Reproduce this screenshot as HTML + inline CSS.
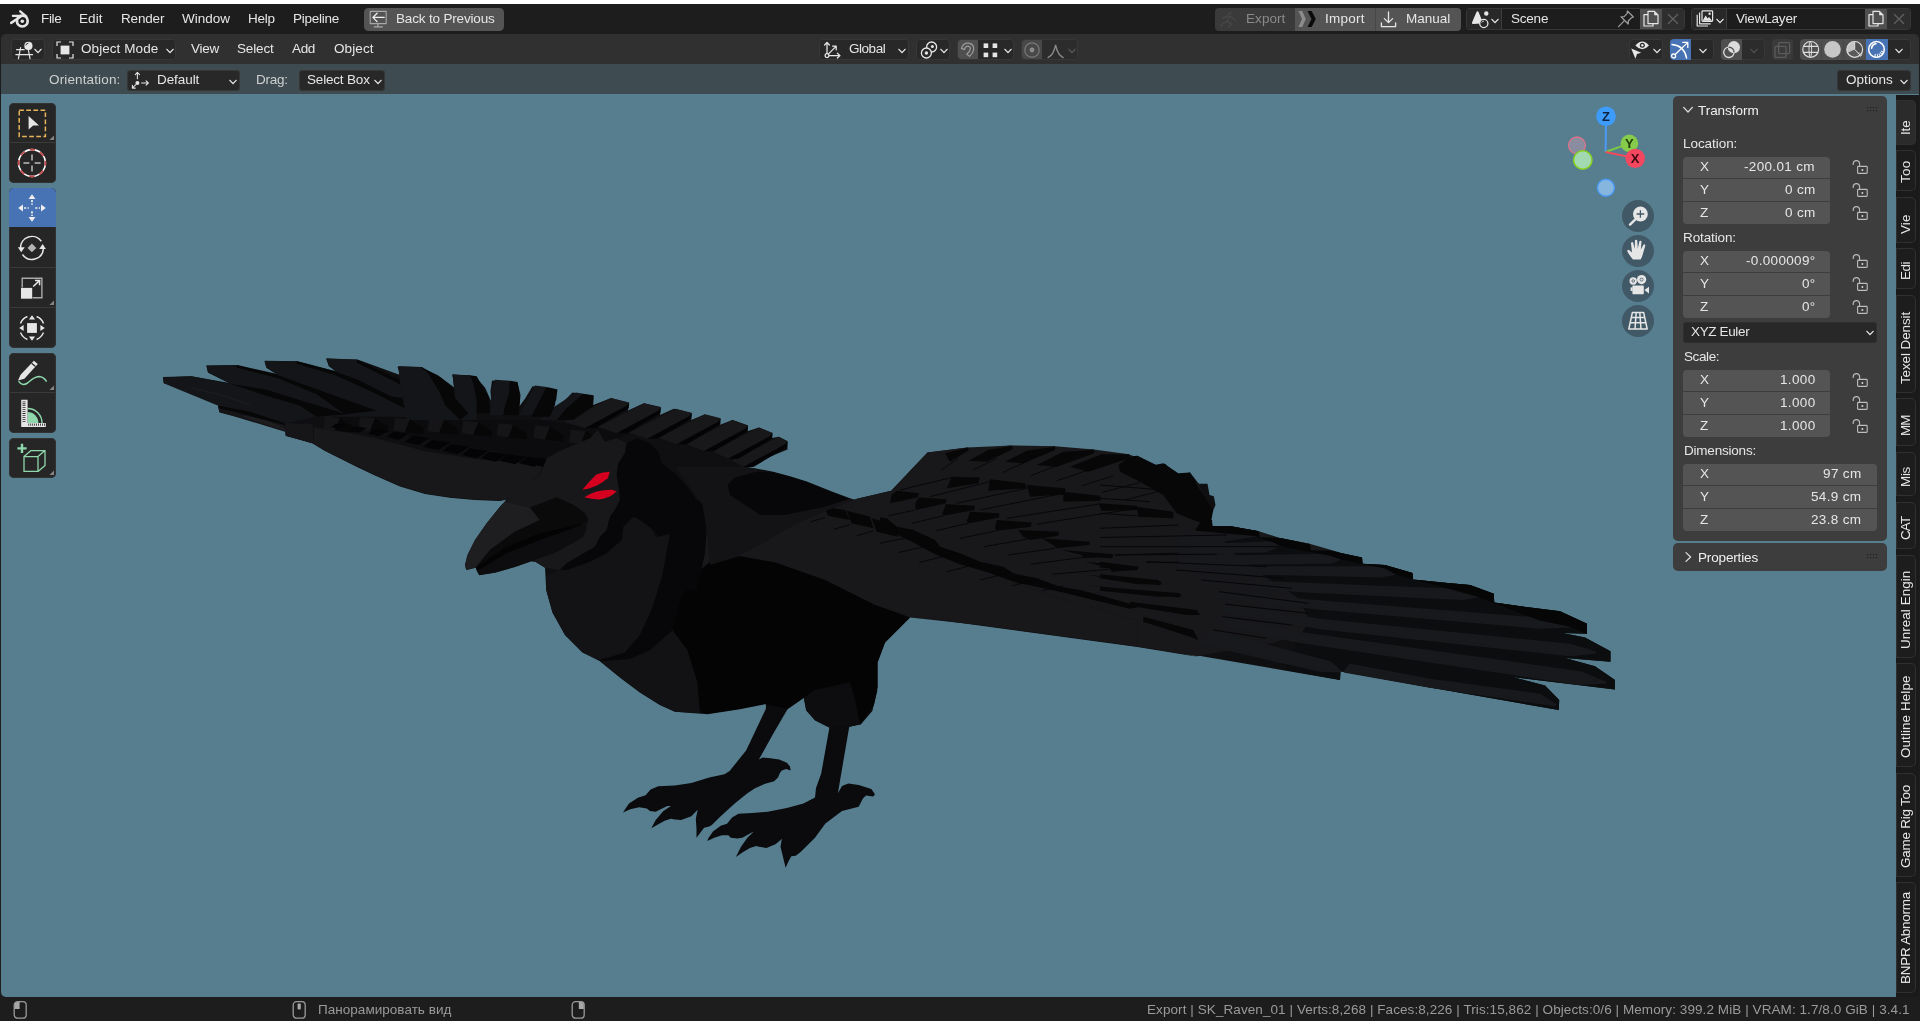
<!DOCTYPE html>
<html><head><meta charset="utf-8"><title>Blender</title>
<style>
html,body{margin:0;padding:0;}
body{width:1920px;height:1021px;overflow:hidden;position:relative;background:#1d1d1d;font-family:"Liberation Sans",sans-serif;}
.b{position:absolute;display:block;box-sizing:border-box;}
.t{position:absolute;white-space:nowrap;height:20px;line-height:20px;will-change:transform;}
.vt{position:absolute;white-space:nowrap;transform-origin:0 0;transform:rotate(-90deg);height:20px;line-height:20px;font-size:13px;color:#e6e6e6;will-change:transform;}
</style></head>
<body>
<div class="b" style="left:0px;top:0px;width:1920px;height:4px;background:#ffffff;border-radius:0px;"></div>
<div class="b" style="left:1px;top:60px;width:1918px;height:937px;background:#567e8f;border-radius:0 0 5px 5px;"></div>
<svg class="b" style="left:0;top:0" width="1920" height="1021" viewBox="0 0 1920 1021"><polygon points="163.0,377.0 191.2,376.2 229.5,383.0 208.0,372.5 206.2,365.5 237.5,365.0 277.5,374.0 266.2,367.5 264.5,361.2 297.5,361.2 336.2,371.2 328.8,366.2 326.2,358.8 357.5,359.5 400.0,375.0 400.0,373.8 397.5,367.0 420.0,367.0 437.5,375.0 455.0,388.0 453.8,382.5 452.5,374.5 475.0,376.2 485.0,387.5 491.2,401.2 490.5,391.2 492.0,380.5 517.5,382.5 520.5,395.0 519.5,406.2 525.0,398.8 532.5,386.2 557.5,389.5 556.2,400.0 550.0,410.5 562.5,402.5 572.5,392.5 593.8,395.8 593.2,405.0 611.2,398.0 628.8,403.0 628.0,410.5 643.8,403.2 660.8,407.0 660.0,415.0 673.8,408.8 691.8,413.0 691.2,420.0 704.5,414.5 720.0,418.8 719.5,425.0 732.5,420.0 748.0,425.5 747.5,431.2 758.8,427.5 772.5,433.0 772.0,438.0 778.8,436.8 787.5,441.2 787.5,449.5 745.0,466.8 735.0,505.0 635.0,535.0 510.0,498.8 500.0,501.0 475.0,500.0 450.0,497.8 425.0,494.0 400.0,486.5 375.0,475.5 357.5,467.2 325.0,451.0 313.8,444.2 312.5,443.0 285.8,436.0 285.0,429.2 219.5,412.5 218.0,406.2 222.5,400.5 163.8,383.0" fill="#0f0f11" />
<polygon points="505.0,501.2 500.0,506.7 486.7,523.3 475.0,540.0 467.5,555.0 465.0,565.0 466.3,570.0 475.8,567.8 477.0,571.2 479.2,575.3 495.0,572.8 515.0,567.0 531.7,561.2 535.8,562.0 545.0,567.8 545.5,576.2 546.2,590.0 552.5,612.5 565.0,635.0 582.5,652.5 600.0,661.2 620.0,677.5 640.0,692.5 660.0,705.0 675.0,711.8 707.5,714.2 740.0,709.2 765.0,704.2 787.5,709.2 803.8,698.0 806.2,710.5 815.0,720.5 830.0,728.0 850.0,726.8 860.0,724.2 873.8,705.0 877.5,687.5 877.5,662.5 885.0,642.5 910.0,617.5 950.0,575.0 910.0,505.0 854.0,499.8 831.8,491.5 806.8,481.5 790.0,476.2 773.2,471.8 760.0,469.2 745.0,466.8 685.0,452.5 610.0,440.0 535.0,450.0" fill="#0f0f11" />
<polygon points="855.0,499.2 891.2,490.8 927.5,452.5 967.5,447.5 968.8,449.5 1011.2,445.5 1012.5,447.5 1055.0,446.2 1056.2,448.8 1093.8,449.5 1095.0,452.5 1128.8,454.2 1130.0,457.0 1137.5,455.8 1156.2,465.0 1165.0,463.8 1177.5,475.0 1190.0,472.5 1198.8,483.8 1207.5,483.8 1209.5,495.0 1213.8,496.2 1215.5,505.0 1210.0,517.5 1202.5,518.0 1211.2,520.0 1212.5,526.2 1230.0,526.2 1258.8,531.2 1259.5,537.5 1280.0,538.0 1309.5,543.8 1310.0,550.0 1330.0,550.8 1362.0,557.5 1362.5,563.8 1385.0,565.0 1412.5,573.0 1413.0,579.5 1442.5,582.5 1470.0,585.0 1493.8,593.8 1494.2,602.5 1530.0,607.5 1560.0,611.2 1587.0,623.8 1587.0,633.8 1562.5,633.0 1585.0,637.5 1610.5,651.2 1610.5,661.8 1565.0,658.0 1595.0,666.2 1615.0,680.0 1615.0,689.5 1512.5,677.0 1545.0,685.5 1559.2,700.0 1558.8,710.0 1430.0,687.5 1340.5,671.2 1340.0,680.0 1180.0,652.5 1197.5,656.8 1137.5,647.0 911.2,616.2 875.0,605.0 850.0,555.0" fill="#0f0f11" />
<polygon points="765.9,702.5 765.9,708.8 746.1,750.5 729.6,771.0 724.5,774.2 709.2,777.4 691.4,783.1 674.8,785.6 658.3,786.3 650.6,789.5 645.6,795.2 637.9,797.7 629.0,803.5 622.9,812.6 630.3,809.2 639.2,807.3 646.8,808.6 650.0,811.1 655.7,811.7 659.6,809.8 667.2,806.0 671.0,806.0 663.4,811.1 655.7,820.0 651.3,828.3 657.0,825.1 664.6,820.7 671.0,818.7 674.8,819.4 681.2,820.0 691.4,816.2 697.7,809.8 695.8,818.7 696.5,828.9 696.5,837.8 700.3,832.7 704.1,827.7 709.2,826.4 711.8,825.1 720.7,816.2 734.7,803.5 747.4,793.3 755.0,788.2 765.2,783.7 774.1,781.2 778.0,777.4 779.9,772.9 781.8,770.4 786.2,769.1 790.7,770.4 790.0,766.5 786.9,762.7 779.2,759.5 770.3,758.3 762.7,757.6 758.9,759.5 773.2,733.8 787.8,708.8 789.9,698.3" fill="#0b0b0d" />
<polygon points="805.5,690.0 805.5,699.4 808.7,710.9 821.2,721.3 829.5,727.1 821.2,773.5 816.0,788.1 815.0,797.4 803.4,803.5 786.9,807.9 767.8,811.7 752.5,813.0 738.5,813.7 732.1,817.5 727.0,823.8 720.7,825.7 713.0,831.5 708.6,837.8 707.3,841.0 714.3,837.8 721.9,835.3 728.3,835.3 730.8,837.8 737.2,838.5 742.3,837.8 749.9,833.4 753.8,831.5 747.4,837.8 741.0,846.8 735.9,856.9 742.3,852.5 749.9,848.0 756.3,846.1 758.9,846.8 766.5,848.0 775.4,844.2 781.8,839.1 780.5,846.8 783.0,856.9 785.6,867.8 788.8,860.8 791.3,856.3 795.8,855.7 800.9,851.8 815.0,837.8 825.4,823.5 842.0,811.0 858.7,806.8 862.9,798.5 866.0,795.4 873.3,796.4 875.0,794.3 871.3,789.1 858.7,784.9 848.3,783.5 842.0,786.0 837.9,793.3 844.1,756.8 849.3,726.5 860.8,724.4 872.3,710.9 877.5,690.0" fill="#0b0b0d" />
<polygon points="707.5,500.0 705.0,525.0 697.5,572.5 712.5,560.0 740.0,556.2 775.0,562.5 825.0,580.0 875.0,605.0 910.0,617.5 980.0,625.0 980.0,500.0" fill="#18181b" />
<polygon points="313.8,427.5 340.0,431.2 375.0,438.0 425.0,451.2 475.0,458.8 512.5,462.5 543.8,464.5 538.8,475.0 510.0,498.0 500.0,500.5 475.0,499.5 450.0,497.2 425.0,493.5 400.0,486.0 375.0,475.0 357.5,466.8 325.0,450.5 313.8,443.8" fill="#18181b" />
<polygon points="285.0,423.0 312.5,424.5 313.8,443.8 285.8,435.5" fill="#161619" />
<polygon points="850.0,512.5 875.0,517.5 912.5,532.5 950.0,552.5 1000.0,577.5 1050.0,595.0 1100.0,610.0 1137.5,620.5 1137.5,646.5 911.2,615.8 875.0,605.0 850.0,592.5" fill="#18181b" />
<polygon points="163.0,377.5 191.7,376.3 230.0,383.8 208.0,372.5 206.7,365.8 236.7,365.3 277.5,375.0 266.7,368.0 264.7,360.8 296.7,361.3 335.8,371.7 329.2,365.8 326.3,358.3 356.7,359.7 400.0,379.2 400.0,376.7 398.3,366.3 421.7,367.0 455.0,390.0 454.2,386.7 452.5,374.7 470.0,375.3 476.7,383.3 476.7,421.7 433.3,423.3 400.0,420.0 350.0,418.3 316.7,416.7 285.0,423.3 218.3,405.8 163.7,383.3" fill="#141518" />
<polygon points="230.0,383.8 266.7,389.7 310.0,403.3 346.7,414.2 316.7,416.7 300.0,405.8 266.7,395.8" fill="#070708" />
<polygon points="236.7,365.3 277.5,375.0 300.0,383.3 341.7,398.3 376.7,410.8 345.0,414.2 316.7,394.2 278.3,378.3 236.7,367.5" fill="#070708" />
<polygon points="296.7,361.3 335.8,371.7 358.3,380.0 391.7,396.7 420.0,400.0 438.3,410.0 408.3,410.0 375.0,393.3 335.0,375.0 296.7,363.7" fill="#070708" />
<polygon points="356.7,359.7 400.0,379.7 423.3,398.3 443.3,405.0 460.0,407.5 438.3,410.3 420.0,400.0 396.7,382.5 356.7,362.5" fill="#070708" />
<polygon points="421.7,367.0 441.7,378.3 455.0,390.0 466.7,405.0 456.7,405.0 440.0,385.8 420.0,370.8" fill="#070708" />
<polygon points="218.3,405.8 250.0,411.7 285.0,423.3 285.3,425.3 250.0,415.8 218.7,408.3" fill="#070708" />
<polygon points="218.7,408.3 250.0,415.8 285.3,425.3 285.0,431.7 219.2,411.7" fill="#151518" />
<polygon points="243.3,415.3 266.7,420.8 285.0,428.3 285.0,430.3 265.0,424.2 243.3,417.3" fill="#1e1e21" />
<polygon points="191.7,387.0 220.0,393.7 250.0,403.7 250.0,405.3 220.0,395.7 191.7,388.7" fill="#1b1b1e" />
<polygon points="285.0,423.0 312.5,424.5 313.8,443.8 285.8,435.5" fill="#161619" />
<polygon points="333.3,416.7 390.0,416.7 460.0,420.0 540.0,420.0 573.3,425.0 615.0,423.3 640.0,428.3 606.7,443.3 556.7,460.0 540.0,458.3 456.7,445.0 390.0,431.7 332.5,424.2" fill="#0c0c0e" />
<polygon points="778.7,436.7 787.5,441.2 785.0,444.5 743.3,467.0 732.0,460.3" fill="#18181b" />
<polygon points="787.5,441.2 787.0,447.0 753.3,467.0 743.3,467.0 785.0,444.5" fill="#040406" />
<polygon points="758.7,427.5 772.5,433.0 770.0,436.3 728.3,458.8 712.0,451.2" fill="#18181b" />
<polygon points="772.5,433.0 772.0,438.8 738.3,458.8 728.3,458.8 770.0,436.3" fill="#040406" />
<polygon points="732.5,420.0 748.0,425.5 745.5,428.8 703.8,451.3 685.8,443.7" fill="#18181b" />
<polygon points="748.0,425.5 747.5,431.3 713.8,451.3 703.8,451.3 745.5,428.8" fill="#040406" />
<polygon points="705.0,414.2 720.8,418.3 718.3,421.7 676.7,444.2 658.3,437.8" fill="#18181b" />
<polygon points="720.8,418.3 720.3,424.2 686.7,444.2 676.7,444.2 718.3,421.7" fill="#040406" />
<polygon points="675.8,408.8 691.7,413.0 689.2,416.3 647.5,438.8 629.2,432.5" fill="#18181b" />
<polygon points="691.7,413.0 691.2,418.8 657.5,438.8 647.5,438.8 689.2,416.3" fill="#040406" />
<polygon points="644.2,403.3 660.8,407.5 658.3,410.8 616.7,433.3 597.5,427.0" fill="#18181b" />
<polygon points="660.8,407.5 660.3,413.3 626.7,433.3 616.7,433.3 658.3,410.8" fill="#040406" />
<polygon points="610.8,398.0 629.2,402.5 626.7,405.8 585.0,428.3 564.2,421.7" fill="#18181b" />
<polygon points="629.2,402.5 628.7,408.3 595.0,428.3 585.0,428.3 626.7,405.8" fill="#040406" />
<polygon points="575.8,392.5 583.3,393.7 566.7,408.3 556.7,420.0 540.0,420.0 553.3,407.5" fill="#141518" />
<polygon points="583.3,393.7 593.3,395.3 592.5,406.7 573.3,420.0 556.7,420.0 566.7,408.3" fill="#070708" />
<polygon points="535.0,385.5 546.7,387.0 540.0,400.0 531.7,415.0 518.3,415.0 520.0,413.3" fill="#141518" />
<polygon points="546.7,387.0 556.7,389.2 555.0,405.0 550.0,416.7 531.7,416.7 540.0,400.0" fill="#070708" />
<polygon points="495.0,379.7 510.0,380.8 509.2,393.3 505.0,406.7 503.3,415.0 490.0,415.0 491.7,388.3" fill="#141518" />
<polygon points="510.0,380.8 517.5,382.0 520.0,398.3 518.3,415.0 503.3,415.0 505.0,406.7 509.2,393.3" fill="#070708" />
<polygon points="452.5,374.5 470.0,375.3 473.3,383.3 476.7,400.0 476.7,413.3 456.7,416.7 454.2,390.0" fill="#141518" />
<polygon points="470.0,375.3 476.7,376.3 488.3,396.7 490.0,413.3 476.7,413.3 476.7,400.0 473.3,383.3" fill="#070708" />
<polygon points="398.3,366.3 421.7,367.2 428.3,373.3 440.0,393.3 445.0,405.0 460.0,420.0 406.7,420.0 400.0,383.3" fill="#141518" />
<polygon points="421.7,367.2 440.0,381.7 456.7,400.0 468.3,413.3 460.0,420.0 445.0,405.0 440.0,393.3 428.3,373.3" fill="#070708" />
<polygon points="325.0,416.7 340.0,418.0 335.0,430.8 323.3,429.2" fill="#151518" />
<polygon points="340.0,418.0 353.3,426.7 353.3,432.5 335.0,430.8" fill="#070708" />
<polygon points="360.0,417.0 375.0,418.3 370.0,431.2 358.3,429.5" fill="#151518" />
<polygon points="375.0,418.3 388.3,427.0 388.3,432.8 370.0,431.2" fill="#070708" />
<polygon points="395.0,418.0 410.0,419.3 405.0,432.2 393.3,430.5" fill="#151518" />
<polygon points="410.0,419.3 423.3,428.0 423.3,433.8 405.0,432.2" fill="#070708" />
<polygon points="429.2,418.7 444.2,420.0 439.2,432.8 427.5,431.2" fill="#151518" />
<polygon points="444.2,420.0 457.5,428.7 457.5,434.5 439.2,432.8" fill="#070708" />
<polygon points="463.3,420.8 478.3,422.2 473.3,435.0 461.7,433.3" fill="#151518" />
<polygon points="478.3,422.2 491.7,430.8 491.7,436.7 473.3,435.0" fill="#070708" />
<polygon points="498.3,423.3 513.3,424.7 508.3,437.5 496.7,435.8" fill="#151518" />
<polygon points="513.3,424.7 526.7,433.3 526.7,439.2 508.3,437.5" fill="#070708" />
<polygon points="535.0,425.3 550.0,426.7 545.0,439.5 533.3,437.8" fill="#151518" />
<polygon points="550.0,426.7 563.3,435.3 563.3,441.2 545.0,439.5" fill="#070708" />
<polygon points="570.8,429.7 585.8,431.0 580.8,443.8 569.2,442.2" fill="#151518" />
<polygon points="585.8,431.0 599.2,439.7 599.2,445.5 580.8,443.8" fill="#070708" />
<polygon points="335.8,423.7 345.8,425.0 339.4,429.1 331.3,427.3" fill="#040406" />
<polygon points="355.0,426.3 366.6,427.9 359.2,432.7 349.7,430.6" fill="#040406" />
<polygon points="374.2,429.0 387.5,430.8 379.0,436.2 368.1,433.8" fill="#040406" />
<polygon points="393.3,431.7 408.3,433.7 398.8,439.8 386.5,437.1" fill="#040406" />
<polygon points="412.5,435.8 429.2,438.1 418.6,444.9 404.9,441.9" fill="#040406" />
<polygon points="431.7,440.0 450.0,442.5 438.3,450.0 423.3,446.7" fill="#040406" />
<polygon points="450.8,444.2 469.2,446.7 457.5,454.2 442.5,450.8" fill="#040406" />
<polygon points="470.0,448.3 488.3,450.8 476.7,458.3 461.7,455.0" fill="#040406" />
<polygon points="489.2,451.7 507.5,454.2 495.8,461.7 480.8,458.3" fill="#040406" />
<polygon points="508.3,454.2 526.7,456.7 515.0,464.2 500.0,460.8" fill="#040406" />
<polygon points="527.5,456.7 545.8,459.2 534.2,466.7 519.2,463.3" fill="#040406" />
<polygon points="542.5,458.3 560.8,460.8 549.2,468.3 534.2,465.0" fill="#040406" />
<polygon points="855.0,499.2 891.2,490.8 927.5,452.5 967.5,447.5 1011.2,445.5 1055.0,446.2 1093.8,449.5 1128.8,454.2 1156.2,465.0 1177.5,475.0 1198.8,483.8 1210.0,517.5 1212.5,526.2 1230.0,526.2 1258.8,531.2 1280.0,538.0 1309.5,543.8 1340.0,552.5 1375.0,605.0 1275.0,642.5 1197.5,656.2 1137.5,646.5 1137.5,620.5 1100.0,610.0 1050.0,595.0 1000.0,577.5 950.0,552.5 912.5,532.5 875.0,517.5 850.0,512.5" fill="#18181b" />
<polygon points="945.0,453.3 968.3,447.5 968.3,450.8 950.0,461.7" fill="#070708" />
<polygon points="968.3,460.8 988.3,450.0 1012.5,445.8 1012.5,449.2 986.7,461.7" fill="#070708" />
<polygon points="1005.0,461.7 1026.7,450.8 1055.0,446.7 1055.0,450.0 1023.3,463.3" fill="#070708" />
<polygon points="1036.7,465.0 1063.3,451.7 1094.2,450.0 1094.2,453.3 1056.7,466.7" fill="#070708" />
<polygon points="1070.0,466.7 1101.7,454.2 1129.2,454.2 1129.2,458.3 1088.3,471.7" fill="#070708" />
<polygon points="1118.3,465.0 1130.0,456.7 1136.7,455.8 1155.0,465.0 1163.3,463.3 1178.3,473.3 1190.0,472.5 1200.0,490.0 1213.3,510.0 1210.0,526.7 1176.7,513.3 1163.3,495.0 1140.0,481.7 1120.0,471.7" fill="#070708" />
<polygon points="951.7,476.7 980.0,477.5 978.3,483.3 946.7,488.3" fill="#070708" />
<polygon points="990.0,479.2 1025.0,483.3 1026.7,488.3 988.3,490.8" fill="#070708" />
<polygon points="1026.7,485.0 1065.0,488.3 1065.8,494.2 1030.0,496.7" fill="#070708" />
<polygon points="1063.3,491.7 1100.0,495.8 1100.8,500.8 1063.3,501.7" fill="#070708" />
<polygon points="1098.3,503.3 1136.7,505.8 1137.5,510.0 1101.7,510.8" fill="#070708" />
<polygon points="1136.7,506.7 1173.3,511.7 1173.3,518.3 1138.3,516.7" fill="#070708" />
<polygon points="891.7,495.0 896.7,490.8 919.2,493.3 917.5,497.5 890.0,503.3" fill="#070708" />
<polygon points="915.0,503.3 919.2,497.5 946.7,499.2 945.8,503.3 915.8,510.0" fill="#070708" />
<polygon points="942.5,513.3 945.8,504.2 975.0,505.8 974.2,510.0 943.3,515.8" fill="#070708" />
<polygon points="966.7,521.7 970.0,511.7 999.2,513.3 999.2,517.5 969.2,523.3" fill="#070708" />
<polygon points="995.0,528.3 996.7,520.0 1031.7,522.5 1030.8,526.7 996.7,530.8" fill="#070708" />
<polygon points="1023.3,536.7 1018.3,530.0 1059.2,531.7 1058.3,535.8 1030.0,540.0" fill="#070708" />
<polygon points="1053.3,545.0 1041.7,538.3 1090.0,541.7 1089.2,545.0 1056.7,548.3" fill="#070708" />
<polygon points="1081.7,555.0 1061.7,550.0 1112.5,554.2 1111.7,556.7 1083.3,558.3" fill="#070708" />
<polygon points="1110.0,568.3 1085.0,561.7 1138.3,566.7 1137.5,570.0 1111.7,571.7" fill="#070708" />
<polygon points="1138.3,583.3 1088.3,575.0 1161.7,581.7 1160.0,585.0" fill="#070708" />
<polygon points="1163.3,595.0 1085.0,585.0 1180.0,595.0 1178.3,597.5" fill="#070708" />
<polygon points="880.0,517.5 886.7,518.3 896.7,526.7 913.3,530.0 935.0,540.0 940.0,546.7 960.0,553.3 980.0,561.7 1003.3,566.7 1013.3,573.3 1036.7,578.3 1060.0,586.7 1080.0,590.0 1105.0,596.7 1140.0,606.7 1130.0,608.7 1096.7,600.8 1063.3,592.5 1040.0,587.5 1016.7,582.5 988.3,572.5 960.0,564.2 935.0,554.2 913.3,542.5 893.3,532.5 880.0,526.7" fill="#060607" />
<polygon points="823.3,506.7 845.0,510.0 850.0,520.0 828.3,515.8" fill="#060607" />
<polygon points="846.7,510.8 870.0,516.7 873.3,528.3 851.7,523.3" fill="#060607" />
<polygon points="871.7,518.3 895.0,525.0 898.3,536.7 876.7,531.7" fill="#060607" />
<line x1="810.0" y1="522.0" x2="825.0" y2="517.5" stroke="#060608" stroke-width="0.9"/>
<line x1="834.2" y1="529.2" x2="850.0" y2="524.7" stroke="#060608" stroke-width="0.9"/>
<line x1="856.7" y1="535.8" x2="873.3" y2="530.8" stroke="#060608" stroke-width="0.9"/>
<line x1="941.7" y1="470.0" x2="958.3" y2="458.3" stroke="#060608" stroke-width="0.9"/>
<line x1="973.3" y1="470.0" x2="996.7" y2="458.3" stroke="#060608" stroke-width="0.9"/>
<line x1="1002.5" y1="472.5" x2="1030.0" y2="460.0" stroke="#060608" stroke-width="0.9"/>
<line x1="1030.8" y1="475.8" x2="1060.0" y2="464.2" stroke="#060608" stroke-width="0.9"/>
<line x1="1056.7" y1="480.8" x2="1088.3" y2="470.0" stroke="#060608" stroke-width="0.9"/>
<line x1="1081.7" y1="485.8" x2="1113.3" y2="475.8" stroke="#060608" stroke-width="0.9"/>
<line x1="1101.7" y1="492.5" x2="1140.0" y2="482.5" stroke="#060608" stroke-width="0.9"/>
<line x1="1125.0" y1="500.0" x2="1163.3" y2="490.0" stroke="#060608" stroke-width="0.9"/>
<line x1="900.0" y1="490.0" x2="951.7" y2="477.5" stroke="#060608" stroke-width="0.9"/>
<line x1="930.0" y1="496.7" x2="990.0" y2="481.7" stroke="#060608" stroke-width="0.9"/>
<line x1="956.7" y1="503.3" x2="1026.7" y2="488.3" stroke="#060608" stroke-width="0.9"/>
<line x1="980.0" y1="510.0" x2="1063.3" y2="493.3" stroke="#060608" stroke-width="0.9"/>
<line x1="1006.7" y1="518.3" x2="1098.3" y2="504.2" stroke="#060608" stroke-width="0.9"/>
<line x1="1036.7" y1="524.2" x2="1136.7" y2="508.3" stroke="#060608" stroke-width="0.9"/>
<line x1="888.3" y1="515.8" x2="915.0" y2="510.0" stroke="#060608" stroke-width="0.9"/>
<line x1="911.7" y1="523.3" x2="943.3" y2="515.8" stroke="#060608" stroke-width="0.9"/>
<line x1="935.8" y1="530.8" x2="968.3" y2="523.3" stroke="#060608" stroke-width="0.9"/>
<line x1="960.0" y1="538.3" x2="996.7" y2="530.8" stroke="#060608" stroke-width="0.9"/>
<line x1="984.2" y1="546.7" x2="1026.7" y2="539.2" stroke="#060608" stroke-width="0.9"/>
<line x1="1008.3" y1="555.0" x2="1055.0" y2="548.3" stroke="#060608" stroke-width="0.9"/>
<line x1="1030.8" y1="564.2" x2="1082.5" y2="557.5" stroke="#060608" stroke-width="0.9"/>
<line x1="1052.5" y1="574.2" x2="1110.0" y2="569.2" stroke="#060608" stroke-width="0.9"/>
<line x1="880.0" y1="543.3" x2="908.3" y2="537.5" stroke="#060608" stroke-width="0.9"/>
<line x1="898.3" y1="552.5" x2="931.7" y2="545.0" stroke="#060608" stroke-width="0.9"/>
<line x1="919.2" y1="562.5" x2="955.0" y2="553.3" stroke="#060608" stroke-width="0.9"/>
<line x1="946.7" y1="571.7" x2="980.0" y2="563.3" stroke="#060608" stroke-width="0.9"/>
<line x1="980.0" y1="580.0" x2="1010.0" y2="572.5" stroke="#060608" stroke-width="0.9"/>
<line x1="1011.7" y1="585.8" x2="1038.3" y2="579.2" stroke="#060608" stroke-width="0.9"/>
<line x1="1041.7" y1="590.8" x2="1063.3" y2="585.8" stroke="#060608" stroke-width="0.9"/>
<line x1="1115.0" y1="555.0" x2="1200.0" y2="552.5" stroke="#060608" stroke-width="0.9"/>
<line x1="1146.7" y1="562.5" x2="1200.0" y2="561.7" stroke="#060608" stroke-width="0.9"/>
<line x1="1176.7" y1="570.3" x2="1200.0" y2="570.8" stroke="#060608" stroke-width="0.9"/>
<polygon points="1212.5,526.2 1231.2,526.2 1258.8,531.2 1259.5,537.5 1280.0,538.0 1310.0,544.5 1310.5,550.5 1330.0,550.8 1362.0,557.5 1362.5,563.8 1385.0,565.0 1412.5,573.0 1413.0,579.5 1442.5,582.5 1470.0,585.0 1493.8,593.8 1494.2,602.5 1530.0,607.5 1560.0,611.2 1587.0,623.8 1587.0,633.8 1562.5,633.0 1585.0,637.5 1610.5,651.2 1610.5,661.8 1565.0,658.0 1595.0,666.2 1615.0,680.0 1615.0,689.5 1512.5,677.0 1545.0,685.5 1559.2,700.0 1558.8,710.0 1430.0,687.5 1340.5,671.2 1340.0,680.0 1285.0,670.0 1297.5,640.0 1310.0,620.0 1297.5,597.5 1270.0,580.0 1235.0,555.0" fill="#0c0d0f" />
<polygon points="1180.0,533.8 1225.0,533.0 1255.0,535.5 1225.0,540.0 1180.0,541.2" fill="#18191c" stroke="#18191c" stroke-width="2.6" stroke-linejoin="round"/>
<polygon points="1180.0,546.2 1275.0,542.5 1280.0,545.5 1265.0,551.2 1180.0,552.5" fill="#18191c" stroke="#18191c" stroke-width="2.6" stroke-linejoin="round"/>
<polygon points="1180.0,557.5 1330.0,555.0 1340.0,558.8 1330.0,562.5 1180.0,563.8" fill="#18191c" stroke="#18191c" stroke-width="2.6" stroke-linejoin="round"/>
<polygon points="1180.0,567.5 1385.0,567.5 1395.0,573.8 1380.0,576.2 1275.0,573.8 1180.0,570.5" fill="#18191c" stroke="#18191c" stroke-width="2.6" stroke-linejoin="round"/>
<polygon points="1202.5,580.0 1455.0,590.0 1477.5,596.2 1462.5,598.8 1305.0,591.2 1202.5,583.0" fill="#18191c" stroke="#18191c" stroke-width="2.6" stroke-linejoin="round"/>
<polygon points="1218.8,592.5 1330.0,602.5 1555.0,620.0 1570.0,626.2 1540.0,627.5 1315.0,608.0 1218.8,596.8" fill="#18191c" stroke="#18191c" stroke-width="2.6" stroke-linejoin="round"/>
<polygon points="1225.0,605.0 1320.0,620.0 1570.0,645.0 1595.0,652.5 1570.0,655.0 1320.0,628.0 1225.0,610.5" fill="#18191c" stroke="#18191c" stroke-width="2.6" stroke-linejoin="round"/>
<polygon points="1222.5,617.5 1295.0,632.5 1580.0,672.5 1605.0,682.5 1580.0,683.8 1292.5,640.5 1222.5,624.2" fill="#18191c" stroke="#18191c" stroke-width="2.6" stroke-linejoin="round"/>
<polygon points="1212.5,630.0 1255.0,642.5 1330.0,662.5 1340.0,671.2 1320.0,670.5 1200.0,643.0" fill="#18191c" stroke="#18191c" stroke-width="2.6" stroke-linejoin="round"/>
<polygon points="1350.0,665.0 1430.0,680.0 1540.0,695.0 1555.0,705.0 1430.0,686.5 1345.0,671.5" fill="#18191c" stroke="#18191c" stroke-width="2.6" stroke-linejoin="round"/>
<polygon points="1203.8,518.0 1212.0,520.0 1212.5,526.2 1231.2,526.2 1258.8,531.2 1259.5,537.5 1280.0,538.0 1310.0,544.5 1310.5,550.5 1330.0,550.8 1362.0,557.5 1362.5,563.8 1385.0,565.0 1412.5,573.0 1413.0,579.5 1442.5,582.5 1470.0,585.0 1493.8,593.8 1494.2,602.5 1530.0,607.5 1560.0,611.2 1587.0,623.8 1587.0,633.8 1570.0,626.8 1540.0,620.5 1477.5,596.8 1455.0,590.5 1395.0,574.2 1385.0,568.5 1340.0,559.2 1330.0,555.8 1280.0,546.0 1275.0,543.2 1255.0,536.0 1225.0,533.5 1195.0,530.5" fill="#060607" />
<line x1="1115.0" y1="555.0" x2="1216.7" y2="554.2" stroke="#060608" stroke-width="1"/>
<line x1="1146.7" y1="561.7" x2="1266.7" y2="566.7" stroke="#060608" stroke-width="1"/>
<line x1="1176.7" y1="570.0" x2="1283.3" y2="578.3" stroke="#060608" stroke-width="1"/>
<line x1="1201.7" y1="580.0" x2="1291.7" y2="588.3" stroke="#060608" stroke-width="1"/>
<line x1="1219.2" y1="591.7" x2="1308.3" y2="603.3" stroke="#060608" stroke-width="1"/>
<line x1="1225.0" y1="604.2" x2="1308.3" y2="613.3" stroke="#060608" stroke-width="1"/>
<line x1="1222.5" y1="616.7" x2="1291.7" y2="625.0" stroke="#060608" stroke-width="1"/>
<line x1="1213.3" y1="630.0" x2="1266.7" y2="638.3" stroke="#060608" stroke-width="1"/>
<line x1="1100.0" y1="485.0" x2="1163.3" y2="490.0" stroke="#060608" stroke-width="1"/>
<line x1="1100.0" y1="498.3" x2="1150.0" y2="501.7" stroke="#060608" stroke-width="1"/>
<line x1="1100.0" y1="513.3" x2="1136.7" y2="515.8" stroke="#060608" stroke-width="1"/>
<line x1="1100.0" y1="528.3" x2="1178.3" y2="525.0" stroke="#060608" stroke-width="1"/>
<line x1="1100.0" y1="537.5" x2="1226.7" y2="535.0" stroke="#060608" stroke-width="1"/>
<line x1="1100.0" y1="546.7" x2="1280.0" y2="546.7" stroke="#060608" stroke-width="1"/>
<polygon points="1100.0,553.3 1113.3,555.0 1111.7,558.3 1100.0,557.5" fill="#070708" />
<polygon points="1100.0,561.7 1138.3,566.7 1136.7,570.0 1100.0,567.5" fill="#070708" />
<polygon points="1100.0,574.2 1158.3,580.0 1161.7,584.2 1138.3,584.2 1100.0,578.3" fill="#070708" />
<polygon points="1100.0,586.7 1180.0,593.3 1181.7,596.7 1158.3,596.7 1100.0,590.8" fill="#070708" />
<polygon points="1130.0,601.7 1196.7,610.0 1200.0,615.0 1186.7,615.0 1130.0,605.8" fill="#070708" />
<polygon points="1143.3,616.7 1193.3,630.0 1198.3,640.0 1190.0,636.7 1143.3,621.7" fill="#070708" />
<polygon points="546.2,575.0 553.8,573.0 582.5,557.5 610.0,537.5 620.0,530.0 632.5,516.2 650.0,525.0 655.0,537.5 670.0,533.8 662.5,575.0 652.5,607.5 640.0,635.0 625.0,652.5 600.0,660.0 582.5,652.5 565.0,635.0 552.5,612.5 546.2,590.0" fill="#131316" />
<polygon points="600.0,661.2 630.0,658.8 650.0,650.0 672.5,630.0 687.5,650.0 697.5,682.5 700.0,713.0 675.0,711.8 660.0,705.0 640.0,692.5 620.0,677.5" fill="#121215" />
<polygon points="672.5,630.0 680.0,600.0 697.5,572.5 712.5,560.0 740.0,556.2 775.0,562.5 825.0,580.0 875.0,605.0 910.0,617.5 885.0,642.5 877.5,662.5 877.5,687.5 873.8,705.0 860.0,723.8 855.0,700.0 850.0,682.5 815.0,690.0 803.8,697.5 787.5,708.8 765.0,703.8 740.0,708.8 707.5,713.8 700.0,712.5 697.5,682.5 687.5,650.0" fill="#040404" />
<polygon points="803.8,697.5 815.0,690.0 850.0,682.5 855.0,700.0 860.0,723.8 850.0,726.2 830.0,727.5 815.0,720.0 806.2,710.0" fill="#0d0d0f" />
<polygon points="675.0,500.0 707.5,500.0 705.0,525.0 697.5,572.5 680.0,600.0 672.5,630.0 650.0,650.0 630.0,658.8 600.0,661.2 600.0,660.0 625.0,652.5 640.0,635.0 652.5,607.5 662.5,575.0 670.0,533.8" fill="#070709" />
<polygon points="546.7,458.3 560.0,450.8 578.3,443.3 590.0,438.3 597.5,430.0 605.0,441.7 616.7,438.3 626.7,443.3 625.0,453.3 618.3,463.3 616.7,475.0 619.2,490.0 620.0,500.0 615.0,510.0 610.0,516.7 606.7,530.0 600.0,536.7 595.0,546.7 566.7,563.3 560.0,570.0 545.0,567.8 535.8,562.0 531.7,561.2 556.7,551.7 583.3,536.7 588.3,520.0 585.0,513.3 573.3,505.0 556.7,497.5 530.0,507.5 505.0,501.7 523.3,486.7 540.0,475.0" fill="#18181b" />
<polygon points="626.7,443.3 636.7,438.3 650.0,443.3 658.3,451.7 661.7,463.3 676.7,475.0 690.0,490.0 700.0,506.7 706.7,526.7 705.0,553.3 696.7,590.0 663.3,590.0 670.0,553.3 671.7,533.3 658.3,536.7 653.3,530.0 640.0,520.0 633.3,516.7 623.3,526.7 621.7,540.0 606.7,553.3 590.0,561.7 566.7,570.0 560.0,570.0 566.7,563.3 595.0,546.7 600.0,536.7 606.7,530.0 610.0,516.7 615.0,510.0 620.0,500.0 619.2,490.0 616.7,475.0 618.3,463.3 625.0,453.3" fill="#070709" />
<polygon points="505.0,501.7 500.0,506.7 486.7,523.3 475.0,540.0 467.5,555.0 465.0,565.0 466.3,570.0 475.8,567.5 490.0,550.0 515.0,531.7 540.0,520.0 530.0,507.5" fill="#1e1e21" />
<polygon points="530.0,507.5 556.7,497.5 573.3,505.0 585.0,513.3 588.3,520.0 581.7,524.2 540.0,533.3 506.7,546.7 475.8,567.5 490.0,550.0 515.0,531.7 540.0,520.0" fill="#0a0a0b" />
<polygon points="477.0,570.8 506.7,553.3 540.0,540.0 581.7,525.0 586.7,528.3 583.3,536.7 556.7,551.7 531.7,560.8 515.0,566.7 495.0,572.5 479.2,575.0" fill="#0d0d10" />
<polygon points="477.0,570.8 506.7,553.3 540.0,540.0 581.7,525.0 581.7,523.7 540.0,533.3 506.7,546.7 475.8,567.5" fill="#040404" />
<polygon points="727.5,485.0 735.0,477.5 755.0,472.0 773.2,472.2 790.0,476.8 806.8,482.0 831.8,492.0 850.0,499.0 822.5,507.5 785.0,515.0 760.0,515.0 745.0,505.0 730.0,495.0" fill="#070709" />
<polygon points="675.0,466.8 745.0,466.8 760.0,469.5 755.0,472.0 735.0,477.5 727.5,485.0 730.0,495.0 745.0,505.0 760.0,515.0 785.0,515.0 822.5,507.5 850.0,498.8 855.0,499.2 810.0,517.5 785.0,530.0 760.0,545.0 735.0,557.5 710.0,565.0 707.5,535.0 702.5,505.0 690.0,487.5" fill="#131316" />
<polygon points="582.4,489.7 589.0,482.0 596.4,474.6 603.0,472.4 609.8,471.8 607.9,478.2 602.0,482.4 596.4,485.8 589.0,488.4" fill="#d5001f" />
<polygon points="584.3,497.3 590.0,494.0 596.4,491.6 604.0,490.2 611.7,489.7 616.8,491.3 613.0,494.4 609.1,496.7 604.0,498.6 598.9,499.6 591.3,498.8" fill="#d5001f" /></svg>
<div class="b" style="left:0px;top:4px;width:1920px;height:30px;background:#1d1d1d;border-radius:0px;"></div>
<svg class="b" style="left:10px;top:9px;" width="20" height="19" viewBox="0 0 20 19"><g fill="none" stroke="#e6e6e6" stroke-linecap="round"><path d="M1.2 13.9 L10.4 7.7" stroke-width="2.5"/><path d="M2.8 6.9 L10.8 6.9" stroke-width="2.1"/><path d="M10.2 2.3 L16.2 7.4" stroke-width="2.3"/></g><circle cx="12.3" cy="12.1" r="5.4" fill="none" stroke="#e6e6e6" stroke-width="2.7"/><circle cx="12.3" cy="12.3" r="1.8" fill="#e6e6e6"/></svg>
<div class="t" style="left:41.18px;top:9.00px;font-size:13.5px;letter-spacing:-0.363px;color:#e6e6e6;">File</div>
<div class="t" style="left:78.95px;top:9.00px;font-size:13.5px;letter-spacing:0.110px;color:#e6e6e6;">Edit</div>
<div class="t" style="left:121.08px;top:9.00px;font-size:13.5px;letter-spacing:-0.163px;color:#e6e6e6;">Render</div>
<div class="t" style="left:182.00px;top:9.00px;font-size:13.5px;letter-spacing:-0.003px;color:#e6e6e6;">Window</div>
<div class="t" style="left:248.43px;top:9.00px;font-size:13.5px;letter-spacing:-0.266px;color:#e6e6e6;">Help</div>
<div class="t" style="left:293.43px;top:9.00px;font-size:13.5px;letter-spacing:-0.254px;color:#e6e6e6;">Pipeline</div>
<div class="b" style="left:364px;top:8px;width:140px;height:22.6px;background:#545454;border-radius:4.5px;"></div>
<svg class="b" style="left:368px;top:9px;" width="20" height="20" viewBox="0 0 20 20"><g fill="none" stroke="#a8a8a8" stroke-width="1.1" stroke-linejoin="round" stroke-linecap="butt"><rect x="2.2" y="2.4" width="16" height="12.2"/><path d="M9.9 14.6 L9.9 17.4 M5.8 17.9 L14.9 17.9" stroke-width="1.3"/></g><path d="M5 8.4 L16.2 8.4 M9.1 4.2 L4.9 8.4 L9.1 12.6" fill="none" stroke="#f0f0f0" stroke-width="1.3" stroke-linecap="round" stroke-linejoin="round"/></svg>
<div class="t" style="left:395.78px;top:9.00px;font-size:13.5px;letter-spacing:-0.168px;color:#e6e6e6;">Back to Previous</div>
<div class="b" style="left:1215px;top:8px;width:80px;height:22.6px;background:#3a3a3a;border-radius:4px 0 0 4px;"></div>
<div class="b" style="left:1295px;top:8px;width:80px;height:22.6px;background:#545454;border-radius:0px;"></div>
<div class="b" style="left:1375px;top:8px;width:1px;height:22.6px;background:#474747;border-radius:0px;"></div>
<div class="b" style="left:1376px;top:8px;width:85px;height:22.6px;background:#545454;border-radius:0 4px 4px 0;"></div>
<svg class="b" style="left:1219px;top:10px;" width="20" height="18" viewBox="0 0 20 18"><g fill="none" stroke="#464646" stroke-width="1.5" stroke-linecap="round" stroke-linejoin="round"><circle cx="11" cy="3.4" r="1.6" fill="#464646" stroke="none"/><path d="M3.5 8.5 L8.5 6 L13 7.5 L16.5 10.5"/><path d="M10 7 L8 11.5 L12.5 14 L10 17"/><path d="M8 11.5 L4 13.2 L2 16"/></g></svg>
<div class="t" style="left:1245.57px;top:9.00px;font-size:13.5px;letter-spacing:0.064px;color:#8a8a8a;">Export</div>
<svg class="b" style="left:1297px;top:10px;" width="22" height="18" viewBox="0 0 22 18"><path d="M1.5 1 L5.2 1 L8.8 9 L5.2 17 L1.5 17 L5 9 Z" fill="#8c8c8c"/><path d="M10.5 1 L14.6 1 L18.8 9 L14.6 17 L10.5 17 L14.5 9 Z" fill="#0a0a0a"/></svg>
<div class="t" style="left:1325.18px;top:9.00px;font-size:13.5px;letter-spacing:0.240px;color:#e6e6e6;">Import</div>
<svg class="b" style="left:1380px;top:11px;" width="18" height="18" viewBox="0 0 18 18"><g fill="none" stroke="#e6e6e6" stroke-width="1.3" stroke-linecap="round" stroke-linejoin="round"><path d="M8.5 1 L8.5 11.4 M4.4 7.6 L8.5 11.6 L12.6 7.6"/><path d="M1.4 12 L1.4 15.6 L15.6 15.6 L15.6 12"/></g></svg>
<div class="t" style="left:1406.41px;top:9.00px;font-size:13.5px;letter-spacing:-0.030px;color:#e6e6e6;">Manual</div>
<div class="b" style="left:1466px;top:8.3px;width:219px;height:22.2px;background:#1d1d1d;border-radius:4px;box-shadow:inset 0 0 0 1px #373737;"></div>
<div class="b" style="left:1467px;top:9.3px;width:34px;height:20.2px;background:#282828;border-radius:3px 0 0 3px;"></div>
<div class="b" style="left:1501px;top:9.3px;width:1px;height:20.2px;background:#3d3d3d;border-radius:0px;"></div>
<svg class="b" style="left:1470px;top:10px;" width="22" height="19" viewBox="0 0 22 19"><path d="M7.5 1.2 Q8.3 1.2 8.8 2.6 L12.6 12 Q12.9 13.4 11.4 13.6 L3.2 13.9 Q1.6 13.9 2 12.4 L6.3 2.4 Q6.8 1.2 7.5 1.2 Z" fill="#e6e6e6"/><circle cx="16.3" cy="3.5" r="2.2" fill="#e6e6e6"/><circle cx="13.8" cy="13.5" r="4.1" fill="#282828" stroke="#e6e6e6" stroke-width="1.3"/><path d="M11.7 12.6 Q12.4 11.1 13.9 11" fill="none" stroke="#e6e6e6" stroke-width="0.9"/></svg>
<svg class="b" style="left:1488.5px;top:14.5px;" width="12" height="12" viewBox="0 0 12 12"><path d="M2.9 4.35 L6 7.65 L9.1 4.35" fill="none" stroke="#e6e6e6" stroke-width="1.35" stroke-linecap="round" stroke-linejoin="round"/></svg>
<div class="t" style="left:1510.61px;top:9.00px;font-size:13.5px;letter-spacing:-0.215px;color:#e6e6e6;">Scene</div>
<svg class="b" style="left:1616px;top:9px;" width="20" height="20" viewBox="0 0 20 20"><g fill="none" stroke="#9a9a9a" stroke-width="1.3" stroke-linejoin="round" stroke-linecap="round"><path d="M11.4 2 L17.4 8 L15.6 8.6 L12.4 11.8 L12.2 15 L5 7.8 L8.2 7.6 L11.2 4.4 Z"/><path d="M8.4 11.6 L2.6 17.6"/></g></svg>
<div class="b" style="left:1640px;top:9.3px;width:22px;height:20.2px;background:#4f4f4f;border-radius:0px;"></div>
<svg class="b" style="left:1641px;top:9px;" width="20" height="20" viewBox="0 0 20 20"><g fill="none" stroke="#e6e6e6" stroke-width="1.2" stroke-linejoin="round"><path d="M7 5.6 L3 5.6 L3 17 L12 17 L12 15"/><path d="M7 2.4 L13.4 2.4 L17 6 L17 14.6 L7 14.6 Z"/></g><path d="M13.2 2.4 L13.2 6.2 L17 6.2 Z" fill="#e6e6e6"/></svg>
<div class="b" style="left:1662px;top:9.3px;width:22px;height:20.2px;background:#2e2e2e;border-radius:0 3px 3px 0;"></div>
<svg class="b" style="left:1664px;top:10px;" width="18" height="18" viewBox="0 0 18 18"><path d="M4.4 4.4 L13.6 13.6 M13.6 4.4 L4.4 13.6" stroke="#5e5e5e" stroke-width="1.4" stroke-linecap="round"/></svg>
<div class="b" style="left:1691px;top:8.3px;width:220px;height:22.2px;background:#1d1d1d;border-radius:4px;box-shadow:inset 0 0 0 1px #373737;"></div>
<div class="b" style="left:1692px;top:9.3px;width:34px;height:20.2px;background:#282828;border-radius:3px 0 0 3px;"></div>
<div class="b" style="left:1726px;top:9.3px;width:1px;height:20.2px;background:#3d3d3d;border-radius:0px;"></div>
<svg class="b" style="left:1695px;top:10px;" width="22" height="18" viewBox="0 0 22 18"><g fill="none" stroke="#e6e6e6" stroke-width="1.2" stroke-linejoin="round"><path d="M2.2 4.8 L2.2 16 L13 16"/><path d="M4.6 2.6 L4.6 13.8 L15.6 13.8"/><rect x="7" y="0.8" width="10.6" height="10.6" rx="0.8"/></g><path d="M7.6 10.8 L10.6 5.6 L12.6 8.4 L14 7 L17 10.8 Z" fill="#e6e6e6"/><circle cx="14.6" cy="3.8" r="1.2" fill="#e6e6e6"/></svg>
<svg class="b" style="left:1713.5px;top:14.5px;" width="12" height="12" viewBox="0 0 12 12"><path d="M2.9 4.35 L6 7.65 L9.1 4.35" fill="none" stroke="#e6e6e6" stroke-width="1.35" stroke-linecap="round" stroke-linejoin="round"/></svg>
<div class="t" style="left:1735.50px;top:9.00px;font-size:13.5px;letter-spacing:-0.199px;color:#e6e6e6;">ViewLayer</div>
<div class="b" style="left:1865px;top:9.3px;width:22px;height:20.2px;background:#4f4f4f;border-radius:0px;"></div>
<svg class="b" style="left:1866px;top:9px;" width="20" height="20" viewBox="0 0 20 20"><g fill="none" stroke="#e6e6e6" stroke-width="1.2" stroke-linejoin="round"><path d="M7 5.6 L3 5.6 L3 17 L12 17 L12 15"/><path d="M7 2.4 L13.4 2.4 L17 6 L17 14.6 L7 14.6 Z"/></g><path d="M13.2 2.4 L13.2 6.2 L17 6.2 Z" fill="#e6e6e6"/></svg>
<div class="b" style="left:1887px;top:9.3px;width:23px;height:20.2px;background:#2e2e2e;border-radius:0 3px 3px 0;"></div>
<svg class="b" style="left:1890px;top:10px;" width="18" height="18" viewBox="0 0 18 18"><path d="M4.4 4.4 L13.6 13.6 M13.6 4.4 L4.4 13.6" stroke="#5e5e5e" stroke-width="1.4" stroke-linecap="round"/></svg>
<div class="b" style="left:1px;top:34px;width:1918px;height:30px;background:#303030;border-radius:5px 5px 0 0;"></div>
<div class="b" style="left:11px;top:38.7px;width:34px;height:21.5px;background:#282828;border-radius:4px;box-shadow:inset 0 0 0 1px #373737;"></div>
<svg class="b" style="left:14px;top:39.7px;" width="22" height="20" viewBox="0 0 22 20"><g fill="none" stroke="#e6e6e6" stroke-width="1.2" stroke-linecap="round"><path d="M2.6 9.7 L10.2 9.7 M1.9 14.7 L18.5 14.7 M6.6 7.5 L4.4 18.6 M14.4 10 L16 18.6"/></g><circle cx="14.4" cy="5.9" r="4.1" fill="#e6e6e6"/><path d="M11.8 5.4 Q12.2 3.4 14.4 3.1" fill="none" stroke="#303030" stroke-width="1"/></svg>
<svg class="b" style="left:32.4px;top:45px;" width="12" height="12" viewBox="0 0 12 12"><path d="M2.9 4.35 L6 7.65 L9.1 4.35" fill="none" stroke="#e6e6e6" stroke-width="1.35" stroke-linecap="round" stroke-linejoin="round"/></svg>
<div class="b" style="left:52px;top:38.7px;width:124px;height:21.5px;background:#282828;border-radius:4px;box-shadow:inset 0 0 0 1px #373737;"></div>
<svg class="b" style="left:56px;top:40.7px;" width="18" height="18" viewBox="0 0 18 18"><rect x="4.6" y="4.6" width="8.8" height="8.8" fill="#e6e6e6"/><g fill="none" stroke="#e6e6e6" stroke-width="1.2"><path d="M1 5 L1 1 L5 1 M13 1 L17 1 L17 5 M17 13 L17 17 L13 17 M5 17 L1 17 L1 13"/></g></svg>
<div class="t" style="left:80.97px;top:39.00px;font-size:13.5px;letter-spacing:0.070px;color:#e6e6e6;">Object Mode</div>
<svg class="b" style="left:163.5px;top:45.1px;" width="12" height="12" viewBox="0 0 12 12"><path d="M2.9 4.35 L6 7.65 L9.1 4.35" fill="none" stroke="#e6e6e6" stroke-width="1.35" stroke-linecap="round" stroke-linejoin="round"/></svg>
<div class="t" style="left:191.13px;top:39.00px;font-size:13.5px;letter-spacing:-0.254px;color:#e6e6e6;">View</div>
<div class="t" style="left:237.37px;top:39.00px;font-size:13.5px;letter-spacing:-0.137px;color:#e6e6e6;">Select</div>
<div class="t" style="left:292.47px;top:39.00px;font-size:13.5px;letter-spacing:-0.340px;color:#e6e6e6;">Add</div>
<div class="t" style="left:334.24px;top:39.00px;font-size:13.5px;letter-spacing:0.114px;color:#e6e6e6;">Object</div>
<div class="b" style="left:819px;top:38.7px;width:90px;height:21.5px;background:#282828;border-radius:4px;box-shadow:inset 0 0 0 1px #373737;"></div>
<svg class="b" style="left:823px;top:40.7px;" width="20" height="19" viewBox="0 0 20 19"><g fill="none" stroke="#e6e6e6" stroke-width="1.25" stroke-linecap="round" stroke-linejoin="round"><path d="M4 14.4 L4 1.6 M1.6 4 L4 1.4 L6.4 4"/><path d="M4 14.6 L16.8 14.6 M14.4 12.2 L17 14.6 L14.4 17"/><path d="M4.8 13.6 L13 5.4 M9.6 5.2 L13.2 5.2 L13.2 8.8"/><circle cx="4" cy="14.6" r="1.9" fill="#282828"/></g></svg>
<div class="t" style="left:848.74px;top:39.00px;font-size:13.5px;letter-spacing:-0.471px;color:#e6e6e6;">Global</div>
<svg class="b" style="left:896.3px;top:45.1px;" width="12" height="12" viewBox="0 0 12 12"><path d="M2.9 4.35 L6 7.65 L9.1 4.35" fill="none" stroke="#e6e6e6" stroke-width="1.35" stroke-linecap="round" stroke-linejoin="round"/></svg>
<div class="b" style="left:916px;top:38.7px;width:34px;height:21.5px;background:#282828;border-radius:4px;box-shadow:inset 0 0 0 1px #373737;"></div>
<svg class="b" style="left:919px;top:39.7px;" width="22" height="20" viewBox="0 0 22 20"><g fill="none" stroke="#e6e6e6" stroke-width="1.3"><circle cx="12.6" cy="7" r="5"/><circle cx="7.4" cy="13" r="5" fill="#282828"/></g><circle cx="7.4" cy="13" r="1.7" fill="#e6e6e6"/><circle cx="13.4" cy="6.4" r="1.5" fill="#e6e6e6"/></svg>
<svg class="b" style="left:937.6px;top:45.1px;" width="12" height="12" viewBox="0 0 12 12"><path d="M2.9 4.35 L6 7.65 L9.1 4.35" fill="none" stroke="#e6e6e6" stroke-width="1.35" stroke-linecap="round" stroke-linejoin="round"/></svg>
<div class="b" style="left:957px;top:38.7px;width:57px;height:21.5px;background:#282828;border-radius:4px;box-shadow:inset 0 0 0 1px #373737;"></div>
<div class="b" style="left:958px;top:39.7px;width:20px;height:19.5px;background:#4f4f4f;border-radius:3px 0 0 3px;"></div>
<svg class="b" style="left:958px;top:39.7px;" width="20" height="20" viewBox="0 0 20 20"><path d="M3.4 8.4 Q5.2 2.6 10.6 3.2 Q16.4 4.2 15.6 9.8 Q15 13 11.6 16.4 L8.8 14.2 Q12 11.4 12.4 9.2 Q12.6 6.6 10.2 6.2 Q7.4 6 6.4 9.6 Z" fill="none" stroke="#9b9b9b" stroke-width="1.2" stroke-linejoin="round"/></svg>
<svg class="b" style="left:983px;top:42.7px;" width="16" height="16" viewBox="0 0 16 16"><g fill="#e6e6e6"><rect x="0.6" y="0.4" width="4.6" height="4.6"/><rect x="9.6" y="0.4" width="4.6" height="4.6"/><rect x="0.6" y="9.6" width="4.6" height="4.6"/><rect x="9.6" y="9.6" width="4.6" height="4.6"/></g></svg>
<svg class="b" style="left:1001.6px;top:45.1px;" width="12" height="12" viewBox="0 0 12 12"><path d="M2.9 4.35 L6 7.65 L9.1 4.35" fill="none" stroke="#e6e6e6" stroke-width="1.35" stroke-linecap="round" stroke-linejoin="round"/></svg>
<div class="b" style="left:1021px;top:38.7px;width:57px;height:21.5px;background:#2c2c2c;border-radius:4px;box-shadow:inset 0 0 0 1px #373737;"></div>
<div class="b" style="left:1022px;top:39.7px;width:20px;height:19.5px;background:#484848;border-radius:3px 0 0 3px;"></div>
<svg class="b" style="left:1022px;top:39.7px;" width="20" height="20" viewBox="0 0 20 20"><circle cx="10" cy="10" r="7.2" fill="none" stroke="#7a7a7a" stroke-width="1.2"/><circle cx="10" cy="10" r="2.4" fill="#8a8a8a"/></svg>
<svg class="b" style="left:1046px;top:41.7px;" width="20" height="18" viewBox="0 0 20 18"><path d="M2 15.6 Q7.6 13 9.6 3 Q11.6 13 17.2 15.6" fill="none" stroke="#8a8a8a" stroke-width="1.3" stroke-linecap="round"/></svg>
<svg class="b" style="left:1065.7px;top:45.1px;" width="12" height="12" viewBox="0 0 12 12"><path d="M2.9 4.35 L6 7.65 L9.1 4.35" fill="none" stroke="#5a5a5a" stroke-width="1.35" stroke-linecap="round" stroke-linejoin="round"/></svg>
<div class="b" style="left:1629px;top:38.7px;width:34px;height:21.5px;background:#282828;border-radius:4px;box-shadow:inset 0 0 0 1px #373737;"></div>
<svg class="b" style="left:1631px;top:39.7px;" width="22" height="20" viewBox="0 0 22 20"><path d="M4.4 5.6 Q11.4 -2.6 18 5.6 Q11.4 13 4.4 5.6 Z" fill="#e6e6e6"/><circle cx="11.3" cy="5.2" r="2.5" fill="#282828"/><circle cx="11.3" cy="5.2" r="1.2" fill="#e6e6e6"/><path d="M0.2 8.4 L10.2 12.8 L6 13.9 L4.4 18.8 Z" fill="#e6e6e6"/></svg>
<svg class="b" style="left:1650.6px;top:45.1px;" width="12" height="12" viewBox="0 0 12 12"><path d="M2.9 4.35 L6 7.65 L9.1 4.35" fill="none" stroke="#e6e6e6" stroke-width="1.35" stroke-linecap="round" stroke-linejoin="round"/></svg>
<div class="b" style="left:1670px;top:38.7px;width:44px;height:21.5px;background:#282828;border-radius:4px;box-shadow:inset 0 0 0 1px #373737;"></div>
<div class="b" style="left:1670px;top:38.7px;width:21px;height:21.5px;background:#4772b3;border-radius:4px 0 0 4px;"></div>
<svg class="b" style="left:1670px;top:39.7px;" width="22" height="20" viewBox="0 0 22 20"><g fill="none" stroke="#ffffff" stroke-width="1.3" stroke-linecap="round" stroke-linejoin="round"><path d="M2 4.4 Q14.4 5.6 16.6 18" stroke-width="1.5"/><path d="M4.6 15 L17.6 2.6 M12.8 2.4 L17.8 2.4 L17.8 7.4"/><circle cx="3.6" cy="16" r="2" fill="#4772b3"/></g></svg>
<svg class="b" style="left:1696.6px;top:45.1px;" width="12" height="12" viewBox="0 0 12 12"><path d="M2.9 4.35 L6 7.65 L9.1 4.35" fill="none" stroke="#e6e6e6" stroke-width="1.35" stroke-linecap="round" stroke-linejoin="round"/></svg>
<div class="b" style="left:1721px;top:38.7px;width:44px;height:21.5px;background:#2c2c2c;border-radius:4px;box-shadow:inset 0 0 0 1px #373737;"></div>
<div class="b" style="left:1721px;top:38.7px;width:21px;height:21.5px;background:#4f4f4f;border-radius:4px 0 0 4px;"></div>
<svg class="b" style="left:1721px;top:39.7px;" width="22" height="20" viewBox="0 0 22 20"><circle cx="12.9" cy="7.2" r="6.1" fill="#dcdcdc"/><circle cx="7.9" cy="12.3" r="5.2" fill="none" stroke="#dcdcdc" stroke-width="1.3"/><path d="M7.6 7.1 Q12.9 7.4 13.1 12.6" fill="none" stroke="#4f4f4f" stroke-width="1.2"/></svg>
<svg class="b" style="left:1747.6px;top:45.1px;" width="12" height="12" viewBox="0 0 12 12"><path d="M2.9 4.35 L6 7.65 L9.1 4.35" fill="none" stroke="#505050" stroke-width="1.35" stroke-linecap="round" stroke-linejoin="round"/></svg>
<div class="b" style="left:1772px;top:38.7px;width:21px;height:21.5px;background:#3a3a3a;border-radius:4px;"></div>
<svg class="b" style="left:1772px;top:39.7px;" width="22" height="20" viewBox="0 0 22 20"><g fill="none" stroke="#5c5c5c" stroke-width="1.3"><rect x="6.6" y="2.6" width="11" height="11" rx="1"/><rect x="3" y="6.4" width="11" height="11" rx="1" stroke-dasharray="0"/></g></svg>
<div class="b" style="left:1800px;top:38.7px;width:111px;height:21.5px;background:#282828;border-radius:4px;box-shadow:inset 0 0 0 1px #373737;"></div>
<div class="b" style="left:1800px;top:38.7px;width:66px;height:21.5px;background:#4f4f4f;border-radius:4px 0 0 4px;"></div>
<div class="b" style="left:1821.4px;top:39.7px;width:0.7999999999999545px;height:19.5px;background:#474747;border-radius:0px;"></div>
<div class="b" style="left:1843.4px;top:39.7px;width:0.7999999999999545px;height:19.5px;background:#474747;border-radius:0px;"></div>
<div class="b" style="left:1866px;top:38.7px;width:22px;height:21.5px;background:#4772b3;border-radius:0px;"></div>
<svg class="b" style="left:1800px;top:39px;" width="22" height="21" viewBox="0 0 22 21"><g fill="none" stroke="#dcdcdc" stroke-width="1.2"><circle cx="10.7" cy="10.4" r="7.9"/><ellipse cx="10.3" cy="10.4" rx="1.3" ry="7.9" stroke-width="1"/><path d="M3.4 7.4 L18 7.4 M3.4 13.4 L18 13.4"/></g></svg>
<svg class="b" style="left:1822px;top:39px;" width="22" height="21" viewBox="0 0 22 21"><circle cx="10.5" cy="10.4" r="8.3" fill="#c6c6c6"/></svg>
<svg class="b" style="left:1844px;top:39px;" width="22" height="21" viewBox="0 0 22 21"><path d="M10.7 10.4 L10.7 2.5 A7.9 7.9 0 1 0 16.3 16 Z" fill="#c4c4c4"/><path d="M10.7 10.4 L3.6 13.8 A7.9 7.9 0 0 0 16.3 16 Z" fill="#5a5a5a"/><circle cx="10.7" cy="10.4" r="7.9" fill="none" stroke="#dcdcdc" stroke-width="1.2"/><path d="M10.7 2.5 L10.7 10.4 L16.3 16" fill="none" stroke="#dcdcdc" stroke-width="1"/><path d="M13.6 15.2 L15.2 13.6 M15 16.6 L17 14.4 M16.4 17.6 L18 15.4" stroke="#dcdcdc" stroke-width="0.9"/></svg>
<svg class="b" style="left:1866px;top:39px;" width="22" height="21" viewBox="0 0 22 21"><circle cx="10.5" cy="10.4" r="7.8" fill="none" stroke="#ffffff" stroke-width="1.5"/><path d="M5.6 9.2 Q6.2 5.4 9.8 4.6" fill="none" stroke="#ffffff" stroke-width="1.7" stroke-linecap="round"/><path d="M8.6 16.2 Q14.8 17.2 16.9 10.6" fill="none" stroke="#ffffff" stroke-width="2.8" stroke-dasharray="0.9 1.25"/></svg>
<svg class="b" style="left:1893.4px;top:45.1px;" width="12" height="12" viewBox="0 0 12 12"><path d="M2.9 4.35 L6 7.65 L9.1 4.35" fill="none" stroke="#e6e6e6" stroke-width="1.35" stroke-linecap="round" stroke-linejoin="round"/></svg>
<div class="b" style="left:1px;top:64px;width:1918px;height:30px;background:rgba(48,48,48,0.64);border-radius:0px;"></div>
<div class="t" style="left:49.23px;top:70.00px;font-size:13.5px;letter-spacing:0.135px;color:#cfcfcf;">Orientation:</div>
<div class="b" style="left:127px;top:70px;width:113px;height:21px;background:#282828;border-radius:4px;box-shadow:inset 0 0 0 1px #373737;"></div>
<svg class="b" style="left:131px;top:71px;" width="19" height="19" viewBox="0 0 19 19"><g fill="none" stroke="#e6e6e6" stroke-width="1.05" stroke-linecap="round" stroke-linejoin="round"><path d="M6.4 7.8 L6.4 1.5 M4.3 3.6 L6.4 1.4 L8.5 3.6"/><path d="M10.6 12 L17.2 12 M15.1 9.9 L17.3 12 L15.1 14.1"/><path d="M4.6 13.9 L1.5 17 M1.4 14.2 L1.4 17.1 L4.3 17.1"/></g><circle cx="6.4" cy="11.9" r="2" fill="#e6e6e6"/></svg>
<div class="t" style="left:156.73px;top:70.00px;font-size:13.5px;letter-spacing:-0.068px;color:#e6e6e6;">Default</div>
<svg class="b" style="left:227.3px;top:75.5px;" width="12" height="12" viewBox="0 0 12 12"><path d="M2.9 4.35 L6 7.65 L9.1 4.35" fill="none" stroke="#e6e6e6" stroke-width="1.35" stroke-linecap="round" stroke-linejoin="round"/></svg>
<div class="t" style="left:255.84px;top:70.00px;font-size:13.5px;letter-spacing:-0.282px;color:#cfcfcf;">Drag:</div>
<div class="b" style="left:299px;top:70px;width:86px;height:21px;background:#282828;border-radius:4px;box-shadow:inset 0 0 0 1px #373737;"></div>
<div class="t" style="left:307.39px;top:70.00px;font-size:13.5px;letter-spacing:-0.183px;color:#e6e6e6;">Select Box</div>
<svg class="b" style="left:372.3px;top:75.5px;" width="12" height="12" viewBox="0 0 12 12"><path d="M2.9 4.35 L6 7.65 L9.1 4.35" fill="none" stroke="#e6e6e6" stroke-width="1.35" stroke-linecap="round" stroke-linejoin="round"/></svg>
<div class="b" style="left:1837px;top:70px;width:74px;height:21px;background:#282828;border-radius:4px;box-shadow:inset 0 0 0 1px #373737;"></div>
<div class="t" style="left:1845.57px;top:70.00px;font-size:13.5px;letter-spacing:0.054px;color:#e6e6e6;">Options</div>
<svg class="b" style="left:1898px;top:75.5px;" width="12" height="12" viewBox="0 0 12 12"><path d="M2.9 4.35 L6 7.65 L9.1 4.35" fill="none" stroke="#e6e6e6" stroke-width="1.35" stroke-linecap="round" stroke-linejoin="round"/></svg>
<div class="b" style="left:0px;top:997px;width:1920px;height:24px;background:#1d1d1d;border-radius:0px;"></div>
<svg class="b" style="left:13px;top:1000px;" width="15" height="20" viewBox="0 0 15 20"><rect x="1.2" y="1.6" width="12" height="16.6" rx="3.4" fill="none" stroke="#9a9a9a" stroke-width="1.3"/><path d="M1.6 9 L1.6 4.8 Q1.6 2 4.6 2 L6.6 2 L6.6 9 Z" fill="#a8a8a8"/></svg>
<svg class="b" style="left:292px;top:1000px;" width="15" height="20" viewBox="0 0 15 20"><rect x="1.2" y="1.6" width="12" height="16.6" rx="3.4" fill="none" stroke="#9a9a9a" stroke-width="1.3"/><rect x="5.6" y="3.4" width="3.2" height="6" rx="1" fill="#a8a8a8"/></svg>
<div class="t" style="left:318.28px;top:1000.00px;font-size:13.5px;letter-spacing:0.033px;color:#9a9a9a;">Панорамировать вид</div>
<svg class="b" style="left:571px;top:1000px;" width="15" height="20" viewBox="0 0 15 20"><rect x="1.2" y="1.6" width="12" height="16.6" rx="3.4" fill="none" stroke="#9a9a9a" stroke-width="1.3"/><path d="M12.8 9 L12.8 4.8 Q12.8 2 9.8 2 L7.8 2 L7.8 9 Z" fill="#a8a8a8"/></svg>
<div class="t" style="left:1146.96px;top:1000.00px;font-size:13.5px;letter-spacing:0.078px;color:#9a9a9a;">Export | SK_Raven_01 | Verts:8,268 | Faces:8,226 | Tris:15,862 | Objects:0/6 | Memory: 399.2 MiB | VRAM: 1.7/8.0 GiB | 3.4.1</div>
<div class="b" style="left:9px;top:103px;width:47px;height:79.5px;background:#262626;border-radius:5px;box-shadow:inset 0 0 0 1px #323232;"></div>
<div class="b" style="left:10px;top:142px;width:45px;height:1px;background:#3a3a3a;border-radius:0px;"></div>
<div class="b" style="left:9px;top:188px;width:47px;height:159.60000000000002px;background:#262626;border-radius:5px;box-shadow:inset 0 0 0 1px #323232;"></div>
<div class="b" style="left:9px;top:188px;width:47px;height:39.400000000000006px;background:#4772b3;border-radius:5px 5px 0 0;"></div>
<div class="b" style="left:10px;top:267px;width:45px;height:1px;background:#3a3a3a;border-radius:0px;"></div>
<div class="b" style="left:10px;top:307px;width:45px;height:1px;background:#3a3a3a;border-radius:0px;"></div>
<div class="b" style="left:9px;top:353.3px;width:47px;height:79.5px;background:#262626;border-radius:5px;box-shadow:inset 0 0 0 1px #323232;"></div>
<div class="b" style="left:10px;top:392px;width:45px;height:1px;background:#3a3a3a;border-radius:0px;"></div>
<div class="b" style="left:9px;top:438.3px;width:47px;height:39.69999999999999px;background:#262626;border-radius:5px;box-shadow:inset 0 0 0 1px #323232;"></div>
<svg class="b" style="left:18px;top:108px;" width="30" height="30" viewBox="0 0 30 30"><rect x="1.2" y="2.2" width="26.2" height="26.2" fill="none" stroke="#e8b45a" stroke-width="1.5" stroke-dasharray="4.7 2.4"/><path d="M10.6 8 L21 17.4 L15.2 17.6 L10.6 21.4 Z" fill="#e6e6e6"/></svg>
<svg class="b" style="left:48.6px;top:134.8px;" width="5.4" height="5.4" viewBox="0 0 5.4 5.4"><path d="M5.4 0 L5.4 5.4 L0 5.4 Z" fill="#858585"/></svg>
<svg class="b" style="left:17px;top:148px;" width="30" height="30" viewBox="0 0 30 30"><circle cx="15" cy="15" r="13.4" fill="none" stroke="#ffffff" stroke-width="1.6"/><circle cx="15" cy="15" r="13.4" fill="none" stroke="#c8484a" stroke-width="1.7" stroke-dasharray="5.26 5.26" stroke-dashoffset="2.6"/><path d="M15 6.4 L15 12.4 M15 17.6 L15 23.6 M6.4 15 L12.4 15 M17.6 15 L23.6 15" stroke="#bdbdbd" stroke-width="1.5"/></svg>
<svg class="b" style="left:17px;top:193px;" width="30" height="30" viewBox="0 0 30 30"><g fill="#f0f0f0"><path d="M15 1.2 L18.4 6 L11.6 6 Z"/><path d="M15 28.8 L18.4 24 L11.6 24 Z"/><path d="M1.2 15 L6 11.6 L6 18.4 Z"/><path d="M28.8 15 L24 11.6 L24 18.4 Z"/></g><path d="M15 7 L15 11.8 M15 18.2 L15 23 M7 15 L11.8 15 M18.2 15 L23 15" stroke="#f0f0f0" stroke-width="1.7" stroke-dasharray="2.2 1.4"/></svg>
<svg class="b" style="left:17px;top:233px;" width="30" height="30" viewBox="0 0 30 30"><g fill="none" stroke="#e6e6e6" stroke-width="1.5"><path d="M3.4 14.9 A11.5 11.5 0 0 1 24.3 8.3"/><path d="M26.4 15.9 A11.5 11.5 0 0 1 5.5 21.5"/></g><path d="M14.9 10.5 L19.3 14.9 L14.9 19.3 L10.5 14.9 Z" fill="#b4b4b4"/><path d="M0.9 14.3 L7.7 14.3 L4.2 19.2 Z" fill="#e6e6e6"/><path d="M22.2 16.1 L28.9 16.1 L25.6 10.9 Z" fill="#e6e6e6"/></svg>
<svg class="b" style="left:18px;top:274px;" width="30" height="30" viewBox="0 0 30 30"><path d="M4.2 13.6 L4.2 4.2 L23.9 4.2 L23.9 23.7 L14.6 23.7" fill="none" stroke="#aaaaaa" stroke-width="1.4"/><rect x="3" y="13.9" width="11.2" height="10.8" fill="#e6e6e6"/><path d="M15.2 12.5 L21 7.1 M17 6.6 L21.6 6.6 L21.6 11.2" fill="none" stroke="#e6e6e6" stroke-width="1.5"/></svg>
<svg class="b" style="left:48.6px;top:299.8px;" width="5.4" height="5.4" viewBox="0 0 5.4 5.4"><path d="M5.4 0 L5.4 5.4 L0 5.4 Z" fill="#858585"/></svg>
<svg class="b" style="left:17px;top:313px;" width="30" height="30" viewBox="0 0 30 30"><g fill="none" stroke="#e6e6e6" stroke-width="1.4"><path d="M19.6 3.5 A12.4 12.4 0 0 1 26.5 10.4"/><path d="M26.5 19.6 A12.4 12.4 0 0 1 19.6 26.5"/><path d="M10.4 26.5 A12.4 12.4 0 0 1 3.5 19.6"/><path d="M3.5 10.4 A12.4 12.4 0 0 1 10.4 3.5"/></g><rect x="10.1" y="10.1" width="9.8" height="9.8" fill="#e6e6e6"/><g fill="#e6e6e6"><path d="M15 2.2 L18.1 6.6 L11.9 6.6 Z"/><path d="M15 27.8 L18.1 23.4 L11.9 23.4 Z"/><path d="M2.2 15 L6.6 11.9 L6.6 18.1 Z"/><path d="M27.8 15 L23.4 11.9 L23.4 18.1 Z"/></g></svg>
<svg class="b" style="left:16px;top:358px;" width="32" height="30" viewBox="0 0 32 30"><path d="M2.6 23.2 Q6 28.6 11.6 25 Q18.6 18.6 23 18.6 Q27.6 18.8 30.6 23.6" fill="none" stroke="#8fd8ac" stroke-width="1.5"/><path d="M2 22.4 L4.6 16.8 L17.9 2.8 L21.8 6 L8.4 20.7 Z" fill="#e6e6e6"/><path d="M15.6 5.2 L19.5 8.5" stroke="#262626" stroke-width="1.2"/></svg>
<svg class="b" style="left:48.6px;top:384.8px;" width="5.4" height="5.4" viewBox="0 0 5.4 5.4"><path d="M5.4 0 L5.4 5.4 L0 5.4 Z" fill="#858585"/></svg>
<svg class="b" style="left:16px;top:397px;" width="32" height="32" viewBox="0 0 32 32"><path d="M11.6 15.1 A10.8 10.8 0 0 1 22.4 25.9 L11.6 25.9 Z" fill="#8fd8ac"/><path d="M11.6 11.5 A14.4 14.4 0 0 1 26 25.9" fill="none" stroke="#8fd8ac" stroke-width="1.4"/><path d="M5.2 2.7 L11.6 2.7 L11.6 25.9 L29.8 25.9 L29.8 30.1 L5.2 30.1 Z" fill="#e6e6e6"/><path d="M8 4.4 L8 25" stroke="#262626" stroke-width="3" stroke-dasharray="0.8 1.15"/><path d="M12.4 27.6 L29 27.6" stroke="#262626" stroke-width="2.2" stroke-dasharray="0.8 1.15"/></svg>
<svg class="b" style="left:15px;top:441px;" width="34" height="34" viewBox="0 0 34 34"><path d="M2.4 7.4 L11.6 7.4 M7 2.8 L7 12" stroke="#8fd8ac" stroke-width="2.4"/><g fill="none" stroke="#8fd8ac" stroke-width="1.3" stroke-linejoin="round"><path d="M9 15.6 L23 15.6 L23 30.4 L9 30.4 Z"/><path d="M9 15.6 L16 9.6 L30 9.6 L23 15.6 M30 9.6 L30 24.4 L23 30.4"/></g></svg>
<svg class="b" style="left:48.6px;top:469.8px;" width="5.4" height="5.4" viewBox="0 0 5.4 5.4"><path d="M5.4 0 L5.4 5.4 L0 5.4 Z" fill="#858585"/></svg>
<svg class="b" style="left:1560px;top:100px;will-change:transform;" width="100" height="100" viewBox="0 0 100 100"><path d="M45.6 52 L45.9 26" stroke="#4b9af7" stroke-width="2"/><path d="M45.6 52 L66 44.6" stroke="#7bc943" stroke-width="2"/><path d="M45.6 52 L72 57.4" stroke="#f2495c" stroke-width="2"/><circle cx="17" cy="45.4" r="8.4" fill="#8a8da0" stroke="#dd7389" stroke-width="1.3"/><circle cx="22.8" cy="60" r="9.2" fill="#a2d9b0" stroke="#86d21f" stroke-width="1.5"/><circle cx="45.9" cy="87.8" r="8.5" fill="#86b6dd" stroke="#4b9af7" stroke-width="1.4"/><circle cx="46" cy="16.2" r="9.8" fill="#3d9bfc"/><circle cx="69.4" cy="43.4" r="8.8" fill="#86cc4a"/><circle cx="75.2" cy="58.4" r="9.7" fill="#f5465f"/><g font-family="Liberation Sans, sans-serif" font-weight="bold" font-size="13" text-anchor="middle"><text x="46" y="20.9" fill="#0d2340">Z</text><text x="69.4" y="48" fill="#1e3a0a">Y</text><text x="75.2" y="63" fill="#3a0a10">X</text></g></svg>
<div class="b" style="left:1622px;top:199.6px;width:32px;height:32.0px;background:#415866;border-radius:50%;"></div>
<div class="b" style="left:1622px;top:234.5px;width:32px;height:32.0px;background:#415866;border-radius:50%;"></div>
<div class="b" style="left:1622px;top:269.6px;width:32px;height:32.0px;background:#415866;border-radius:50%;"></div>
<div class="b" style="left:1622px;top:304.5px;width:32px;height:32.0px;background:#415866;border-radius:50%;"></div>
<svg class="b" style="left:1626px;top:204px;" width="24" height="24" viewBox="0 0 24 24"><circle cx="14.4" cy="10" r="7.4" fill="#e6e6e6"/><path d="M14.4 6.2 L14.4 13.8 M10.6 10 L18.2 10" stroke="#415866" stroke-width="1.3"/><path d="M9.4 15.4 L4 20.6" stroke="#e6e6e6" stroke-width="2.4" stroke-linecap="round"/></svg>
<svg class="b" style="left:1626px;top:238px;" width="24" height="24" viewBox="0 0 24 24"><path d="M7 21.4 Q3.4 17.4 1.4 13.4 Q1 12 2.2 11.8 Q3.6 11.8 6 14.4 L5 5.4 Q5 4.2 6 4.1 Q7 4.1 7.3 5.2 L8.8 11 L8.9 2.9 Q9 1.7 10.1 1.7 Q11.2 1.7 11.3 2.9 L11.8 10.8 L13.3 3.6 Q13.6 2.6 14.6 2.8 Q15.6 3 15.5 4.1 L14.8 11.4 L17.3 6.9 Q17.9 6 18.8 6.4 Q19.6 6.9 19.2 7.9 L17 15.4 Q16.2 19.2 14.6 21.4 Z" fill="#e6e6e6"/></svg>
<svg class="b" style="left:1625px;top:273px;" width="26" height="24" viewBox="0 0 26 24"><circle cx="8.2" cy="8" r="3.7" fill="#e6e6e6"/><circle cx="16.6" cy="6.6" r="4.6" fill="#e6e6e6"/><circle cx="8.2" cy="8" r="1.3" fill="none" stroke="#415866" stroke-width="0.8"/><circle cx="16.6" cy="6.6" r="1.5" fill="none" stroke="#415866" stroke-width="0.8"/><rect x="7.4" y="12.6" width="11.4" height="8.6" rx="0.8" fill="#e6e6e6"/><path d="M5.6 14.4 L7.6 14.4 L7.6 18 L5.6 18 Z" fill="#e6e6e6"/><path d="M19.4 17 L24 13.8 L24 20.4 Z" fill="#e6e6e6"/></svg>
<svg class="b" style="left:1626px;top:309px;" width="24" height="24" viewBox="0 0 24 24"><g fill="none" stroke="#e6e6e6" stroke-width="1.5" stroke-linejoin="round"><path d="M6.4 3.4 L17.6 3.4 L21.2 20 L2.8 20 Z"/><path d="M10.2 3.4 L9 20 M13.8 3.4 L15 20 M5.4 8.6 L18.6 8.6 M4.2 13.8 L19.8 13.8"/></g></svg>
<div class="b" style="left:1673px;top:96px;width:214px;height:445px;background:#3d3d3d;border-radius:5px;"></div>
<div class="b" style="left:1673px;top:543px;width:214px;height:28px;background:#3d3d3d;border-radius:5px;"></div>
<svg class="b" style="left:1682px;top:104px;" width="12" height="12" viewBox="0 0 12 12"><path d="M1.6 3.4 L6 8 L10.4 3.4" fill="none" stroke="#dcdcdc" stroke-width="1.3" stroke-linecap="round" stroke-linejoin="round"/></svg>
<div class="t" style="left:1698.22px;top:101.00px;font-size:13.5px;letter-spacing:-0.045px;color:#f0f0f0;">Transform</div>
<svg class="b" style="left:1682px;top:551px;" width="12" height="12" viewBox="0 0 12 12"><path d="M4 1.6 L8.6 6 L4 10.4" fill="none" stroke="#dcdcdc" stroke-width="1.3" stroke-linecap="round" stroke-linejoin="round"/></svg>
<div class="t" style="left:1698.08px;top:548.00px;font-size:13.5px;letter-spacing:-0.153px;color:#f0f0f0;">Properties</div>
<svg class="b" style="left:1867px;top:107px;" width="12" height="6" viewBox="0 0 12 6"><rect x="0" y="0" width="1.2" height="1.2" fill="#1f1f1f"/><rect x="0" y="3" width="1.2" height="1.2" fill="#1f1f1f"/><rect x="3" y="0" width="1.2" height="1.2" fill="#1f1f1f"/><rect x="3" y="3" width="1.2" height="1.2" fill="#1f1f1f"/><rect x="6" y="0" width="1.2" height="1.2" fill="#1f1f1f"/><rect x="6" y="3" width="1.2" height="1.2" fill="#1f1f1f"/><rect x="9" y="0" width="1.2" height="1.2" fill="#1f1f1f"/><rect x="9" y="3" width="1.2" height="1.2" fill="#1f1f1f"/></svg>
<svg class="b" style="left:1867px;top:554px;" width="12" height="6" viewBox="0 0 12 6"><rect x="0" y="0" width="1.2" height="1.2" fill="#1f1f1f"/><rect x="0" y="3" width="1.2" height="1.2" fill="#1f1f1f"/><rect x="3" y="0" width="1.2" height="1.2" fill="#1f1f1f"/><rect x="3" y="3" width="1.2" height="1.2" fill="#1f1f1f"/><rect x="6" y="0" width="1.2" height="1.2" fill="#1f1f1f"/><rect x="6" y="3" width="1.2" height="1.2" fill="#1f1f1f"/><rect x="9" y="0" width="1.2" height="1.2" fill="#1f1f1f"/><rect x="9" y="3" width="1.2" height="1.2" fill="#1f1f1f"/></svg>
<div class="t" style="left:1683.43px;top:134.00px;font-size:13.5px;letter-spacing:-0.054px;color:#e6e6e6;">Location:</div>
<div class="b" style="left:1683px;top:157px;width:147px;height:20.900000000000006px;background:#545454;border-radius:4px 4px 0 0;"></div>
<div class="t" style="left:1700.30px;top:157.00px;font-size:13.5px;letter-spacing:0.000px;color:#e6e6e6;">X</div>
<div class="t" style="left:1744.42px;top:157.00px;font-size:13.5px;letter-spacing:0.338px;color:#e6e6e6;">-200.01 cm</div>
<svg class="b" style="left:1850px;top:157.7px;" width="20" height="20" viewBox="0 0 20 20"><g fill="none" stroke="#bdbdbd" stroke-width="1.1" stroke-linejoin="round"><rect x="7.6" y="8.4" width="9.6" height="7" rx="0.8"/><path d="M9.6 8.4 L9.6 5.6 Q9.4 2.6 6.4 2.6 Q3.4 2.6 3.2 5.6 L3.2 7"/></g><rect x="11.6" y="11" width="1.6" height="2" fill="#c8c8c8"/></svg>
<div class="b" style="left:1683px;top:178.7px;width:147px;height:22.5px;background:#545454;border-radius:0;"></div>
<div class="t" style="left:1700.30px;top:180.00px;font-size:13.5px;letter-spacing:0.000px;color:#e6e6e6;">Y</div>
<div class="t" style="left:1784.60px;top:180.00px;font-size:13.5px;letter-spacing:0.366px;color:#e6e6e6;">0 cm</div>
<svg class="b" style="left:1850px;top:180.7px;" width="20" height="20" viewBox="0 0 20 20"><g fill="none" stroke="#bdbdbd" stroke-width="1.1" stroke-linejoin="round"><rect x="7.6" y="8.4" width="9.6" height="7" rx="0.8"/><path d="M9.6 8.4 L9.6 5.6 Q9.4 2.6 6.4 2.6 Q3.4 2.6 3.2 5.6 L3.2 7"/></g><rect x="11.6" y="11" width="1.6" height="2" fill="#c8c8c8"/></svg>
<div class="b" style="left:1683px;top:202px;width:147px;height:22px;background:#545454;border-radius:0 0 4px 4px;"></div>
<div class="t" style="left:1700.30px;top:203.00px;font-size:13.5px;letter-spacing:0.000px;color:#e6e6e6;">Z</div>
<div class="t" style="left:1784.60px;top:203.00px;font-size:13.5px;letter-spacing:0.366px;color:#e6e6e6;">0 cm</div>
<svg class="b" style="left:1850px;top:203.7px;" width="20" height="20" viewBox="0 0 20 20"><g fill="none" stroke="#bdbdbd" stroke-width="1.1" stroke-linejoin="round"><rect x="7.6" y="8.4" width="9.6" height="7" rx="0.8"/><path d="M9.6 8.4 L9.6 5.6 Q9.4 2.6 6.4 2.6 Q3.4 2.6 3.2 5.6 L3.2 7"/></g><rect x="11.6" y="11" width="1.6" height="2" fill="#c8c8c8"/></svg>
<div class="t" style="left:1683.46px;top:228.00px;font-size:13.5px;letter-spacing:-0.115px;color:#e6e6e6;">Rotation:</div>
<div class="b" style="left:1683px;top:251px;width:147px;height:20.899999999999977px;background:#545454;border-radius:4px 4px 0 0;"></div>
<div class="t" style="left:1700.30px;top:251.00px;font-size:13.5px;letter-spacing:0.000px;color:#e6e6e6;">X</div>
<div class="t" style="left:1745.83px;top:251.00px;font-size:13.5px;letter-spacing:0.331px;color:#e6e6e6;">-0.000009°</div>
<svg class="b" style="left:1850px;top:251.7px;" width="20" height="20" viewBox="0 0 20 20"><g fill="none" stroke="#bdbdbd" stroke-width="1.1" stroke-linejoin="round"><rect x="7.6" y="8.4" width="9.6" height="7" rx="0.8"/><path d="M9.6 8.4 L9.6 5.6 Q9.4 2.6 6.4 2.6 Q3.4 2.6 3.2 5.6 L3.2 7"/></g><rect x="11.6" y="11" width="1.6" height="2" fill="#c8c8c8"/></svg>
<div class="b" style="left:1683px;top:272.7px;width:147px;height:22.5px;background:#545454;border-radius:0;"></div>
<div class="t" style="left:1700.30px;top:274.00px;font-size:13.5px;letter-spacing:0.000px;color:#e6e6e6;">Y</div>
<div class="t" style="left:1801.79px;top:274.00px;font-size:13.5px;letter-spacing:0.323px;color:#e6e6e6;">0°</div>
<svg class="b" style="left:1850px;top:274.7px;" width="20" height="20" viewBox="0 0 20 20"><g fill="none" stroke="#bdbdbd" stroke-width="1.1" stroke-linejoin="round"><rect x="7.6" y="8.4" width="9.6" height="7" rx="0.8"/><path d="M9.6 8.4 L9.6 5.6 Q9.4 2.6 6.4 2.6 Q3.4 2.6 3.2 5.6 L3.2 7"/></g><rect x="11.6" y="11" width="1.6" height="2" fill="#c8c8c8"/></svg>
<div class="b" style="left:1683px;top:296px;width:147px;height:22px;background:#545454;border-radius:0 0 4px 4px;"></div>
<div class="t" style="left:1700.30px;top:297.00px;font-size:13.5px;letter-spacing:0.000px;color:#e6e6e6;">Z</div>
<div class="t" style="left:1801.79px;top:297.00px;font-size:13.5px;letter-spacing:0.323px;color:#e6e6e6;">0°</div>
<svg class="b" style="left:1850px;top:297.7px;" width="20" height="20" viewBox="0 0 20 20"><g fill="none" stroke="#bdbdbd" stroke-width="1.1" stroke-linejoin="round"><rect x="7.6" y="8.4" width="9.6" height="7" rx="0.8"/><path d="M9.6 8.4 L9.6 5.6 Q9.4 2.6 6.4 2.6 Q3.4 2.6 3.2 5.6 L3.2 7"/></g><rect x="11.6" y="11" width="1.6" height="2" fill="#c8c8c8"/></svg>
<div class="b" style="left:1683px;top:322px;width:194px;height:21px;background:#282828;border-radius:4px;box-shadow:inset 0 0 0 1px #2f2f2f;"></div>
<div class="t" style="left:1691.18px;top:322.00px;font-size:13.5px;letter-spacing:-0.358px;color:#e6e6e6;">XYZ Euler</div>
<svg class="b" style="left:1863.8px;top:327px;" width="12" height="12" viewBox="0 0 12 12"><path d="M2.9 4.35 L6 7.65 L9.1 4.35" fill="none" stroke="#e6e6e6" stroke-width="1.35" stroke-linecap="round" stroke-linejoin="round"/></svg>
<div class="t" style="left:1683.59px;top:347.00px;font-size:13.5px;letter-spacing:-0.387px;color:#e6e6e6;">Scale:</div>
<div class="b" style="left:1683px;top:370px;width:147px;height:20.899999999999977px;background:#545454;border-radius:4px 4px 0 0;"></div>
<div class="t" style="left:1700.30px;top:370.00px;font-size:13.5px;letter-spacing:0.000px;color:#e6e6e6;">X</div>
<div class="t" style="left:1779.86px;top:370.00px;font-size:13.5px;letter-spacing:0.338px;color:#e6e6e6;">1.000</div>
<svg class="b" style="left:1850px;top:370.7px;" width="20" height="20" viewBox="0 0 20 20"><g fill="none" stroke="#bdbdbd" stroke-width="1.1" stroke-linejoin="round"><rect x="7.6" y="8.4" width="9.6" height="7" rx="0.8"/><path d="M9.6 8.4 L9.6 5.6 Q9.4 2.6 6.4 2.6 Q3.4 2.6 3.2 5.6 L3.2 7"/></g><rect x="11.6" y="11" width="1.6" height="2" fill="#c8c8c8"/></svg>
<div class="b" style="left:1683px;top:391.7px;width:147px;height:22.5px;background:#545454;border-radius:0;"></div>
<div class="t" style="left:1700.30px;top:393.00px;font-size:13.5px;letter-spacing:0.000px;color:#e6e6e6;">Y</div>
<div class="t" style="left:1779.86px;top:393.00px;font-size:13.5px;letter-spacing:0.338px;color:#e6e6e6;">1.000</div>
<svg class="b" style="left:1850px;top:393.7px;" width="20" height="20" viewBox="0 0 20 20"><g fill="none" stroke="#bdbdbd" stroke-width="1.1" stroke-linejoin="round"><rect x="7.6" y="8.4" width="9.6" height="7" rx="0.8"/><path d="M9.6 8.4 L9.6 5.6 Q9.4 2.6 6.4 2.6 Q3.4 2.6 3.2 5.6 L3.2 7"/></g><rect x="11.6" y="11" width="1.6" height="2" fill="#c8c8c8"/></svg>
<div class="b" style="left:1683px;top:415px;width:147px;height:22px;background:#545454;border-radius:0 0 4px 4px;"></div>
<div class="t" style="left:1700.30px;top:416.00px;font-size:13.5px;letter-spacing:0.000px;color:#e6e6e6;">Z</div>
<div class="t" style="left:1779.86px;top:416.00px;font-size:13.5px;letter-spacing:0.338px;color:#e6e6e6;">1.000</div>
<svg class="b" style="left:1850px;top:416.7px;" width="20" height="20" viewBox="0 0 20 20"><g fill="none" stroke="#bdbdbd" stroke-width="1.1" stroke-linejoin="round"><rect x="7.6" y="8.4" width="9.6" height="7" rx="0.8"/><path d="M9.6 8.4 L9.6 5.6 Q9.4 2.6 6.4 2.6 Q3.4 2.6 3.2 5.6 L3.2 7"/></g><rect x="11.6" y="11" width="1.6" height="2" fill="#c8c8c8"/></svg>
<div class="t" style="left:1683.50px;top:441.00px;font-size:13.5px;letter-spacing:-0.207px;color:#e6e6e6;">Dimensions:</div>
<div class="b" style="left:1683px;top:464px;width:194px;height:20.899999999999977px;background:#545454;border-radius:4px 4px 0 0;"></div>
<div class="t" style="left:1700.30px;top:464.00px;font-size:13.5px;letter-spacing:0.000px;color:#e6e6e6;">X</div>
<div class="t" style="left:1823.22px;top:464.00px;font-size:13.5px;letter-spacing:0.368px;color:#e6e6e6;">97 cm</div>
<div class="b" style="left:1683px;top:485.7px;width:194px;height:22.5px;background:#545454;border-radius:0;"></div>
<div class="t" style="left:1700.30px;top:487.00px;font-size:13.5px;letter-spacing:0.000px;color:#e6e6e6;">Y</div>
<div class="t" style="left:1811.41px;top:487.00px;font-size:13.5px;letter-spacing:0.343px;color:#e6e6e6;">54.9 cm</div>
<div class="b" style="left:1683px;top:509px;width:194px;height:22px;background:#545454;border-radius:0 0 4px 4px;"></div>
<div class="t" style="left:1700.30px;top:510.00px;font-size:13.5px;letter-spacing:0.000px;color:#e6e6e6;">Z</div>
<div class="t" style="left:1811.41px;top:510.00px;font-size:13.5px;letter-spacing:0.343px;color:#e6e6e6;">23.8 cm</div>
<div class="b" style="left:1896px;top:95px;width:23px;height:902px;background:#1a1a1a;border-radius:0px;"></div>
<div class="b" style="left:1896px;top:100px;width:19.5px;height:44.5px;background:#2b2b2b;border-radius:0 5px 5px 0;box-shadow:inset 0 0 0 1px #303030;overflow:hidden;"><div class="vt" style="left:0.3px;top:35.4px;font-size:13.4px;letter-spacing:-0.124px;">Ite</div></div>
<div class="b" style="left:1896px;top:150.3px;width:19.5px;height:41.2px;background:#1d1d1d;border-radius:0 5px 5px 0;box-shadow:inset 0 0 0 1px #303030;overflow:hidden;"><div class="vt" style="left:0.3px;top:32.3px;font-size:13.4px;letter-spacing:0.245px;">Too</div></div>
<div class="b" style="left:1896px;top:197px;width:19.5px;height:45.5px;background:#1d1d1d;border-radius:0 5px 5px 0;box-shadow:inset 0 0 0 1px #303030;overflow:hidden;"><div class="vt" style="left:0.3px;top:36.6px;font-size:13.4px;letter-spacing:0.170px;">Vie</div></div>
<div class="b" style="left:1896px;top:248px;width:19.5px;height:41.0px;background:#1d1d1d;border-radius:0 5px 5px 0;box-shadow:inset 0 0 0 1px #303030;overflow:hidden;"><div class="vt" style="left:0.3px;top:31.8px;font-size:13.4px;letter-spacing:-0.477px;">Edi</div></div>
<div class="b" style="left:1896px;top:294.5px;width:19.5px;height:98.1px;background:#1d1d1d;border-radius:0 5px 5px 0;box-shadow:inset 0 0 0 1px #303030;overflow:hidden;"><div class="vt" style="left:0.3px;top:89.1px;font-size:13.4px;letter-spacing:-0.071px;">Texel Densit</div></div>
<div class="b" style="left:1896px;top:398.2px;width:19.5px;height:47.8px;background:#1d1d1d;border-radius:0 5px 5px 0;box-shadow:inset 0 0 0 1px #303030;overflow:hidden;"><div class="vt" style="left:0.3px;top:38.3px;font-size:13.4px;letter-spacing:-0.991px;">MM</div></div>
<div class="b" style="left:1896px;top:451.8px;width:19.5px;height:44.2px;background:#1d1d1d;border-radius:0 5px 5px 0;box-shadow:inset 0 0 0 1px #303030;overflow:hidden;"><div class="vt" style="left:0.3px;top:35.1px;font-size:13.4px;letter-spacing:-0.266px;">Mis</div></div>
<div class="b" style="left:1896px;top:501.8px;width:19.5px;height:47.2px;background:#1d1d1d;border-radius:0 5px 5px 0;box-shadow:inset 0 0 0 1px #303030;overflow:hidden;"><div class="vt" style="left:0.3px;top:37.8px;font-size:13.4px;letter-spacing:-0.819px;">CAT</div></div>
<div class="b" style="left:1896px;top:554.7px;width:19.5px;height:102.9px;background:#1d1d1d;border-radius:0 5px 5px 0;box-shadow:inset 0 0 0 1px #303030;overflow:hidden;"><div class="vt" style="left:0.3px;top:93.9px;font-size:13.4px;letter-spacing:0.073px;">Unreal Engin</div></div>
<div class="b" style="left:1896px;top:662.7px;width:19.5px;height:104.6px;background:#1d1d1d;border-radius:0 5px 5px 0;box-shadow:inset 0 0 0 1px #303030;overflow:hidden;"><div class="vt" style="left:0.3px;top:95.7px;font-size:13.4px;letter-spacing:0.104px;">Outline Helpe</div></div>
<div class="b" style="left:1896px;top:772.8px;width:19.5px;height:104.2px;background:#1d1d1d;border-radius:0 5px 5px 0;box-shadow:inset 0 0 0 1px #303030;overflow:hidden;"><div class="vt" style="left:0.3px;top:95.1px;font-size:13.4px;letter-spacing:-0.196px;">Game Rig Too</div></div>
<div class="b" style="left:1896px;top:882px;width:19.5px;height:110.8px;background:#1d1d1d;border-radius:0 5px 5px 0;box-shadow:inset 0 0 0 1px #303030;overflow:hidden;"><div class="vt" style="left:0.3px;top:101.7px;font-size:13.4px;letter-spacing:-0.209px;">BNPR Abnorma</div></div>
</body></html>
